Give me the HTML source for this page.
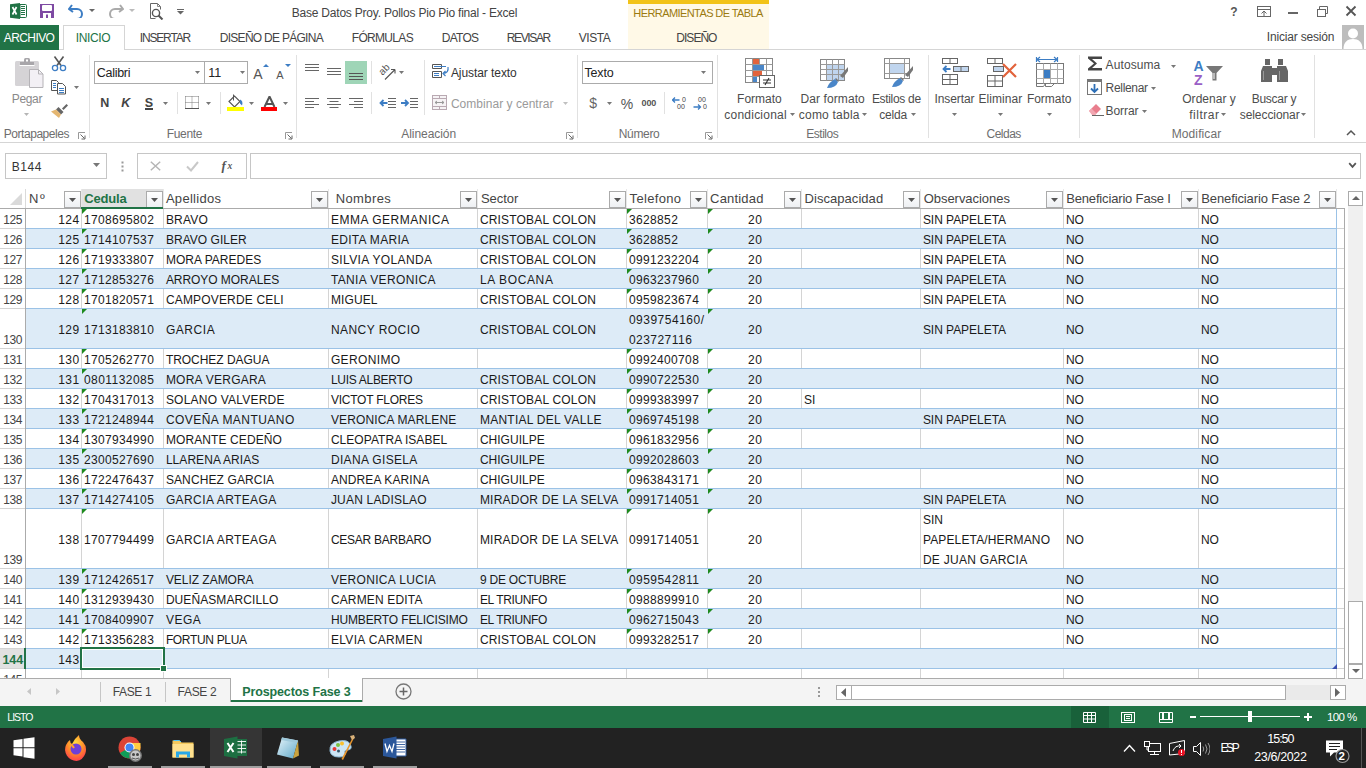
<!DOCTYPE html><html><head><meta charset="utf-8"><style>html,body{margin:0;padding:0;width:1366px;height:768px;overflow:hidden;background:#fff;position:relative;font-family:"Liberation Sans",sans-serif;}svg{display:block}</style></head><body><div style="position:absolute;left:291.78px;top:3.00px;font-size:12px;line-height:20px;color:#444;white-space:pre;letter-spacing:-0.216px;">Base Datos Proy. Pollos Pio Pio final - Excel</div>
<div style="position:absolute;left:628px;top:0px;width:141px;height:4px;background:#F2C318;"></div>
<div style="position:absolute;left:628px;top:4px;width:141px;height:46px;background:#FFF9E7;"></div>
<div style="position:absolute;left:633.34px;top:3.00px;font-size:11px;line-height:20px;color:#9B7A0F;white-space:pre;letter-spacing:-0.586px;">HERRAMIENTAS DE TABLA</div>
<div style="position:absolute;left:1230.28px;top:2.00px;font-size:12px;line-height:20px;color:#555;white-space:pre;font-weight:700;">?</div>
<svg style="position:absolute;left:1256px;top:5px;" width="16" height="13" viewBox="0 0 16 13"><rect x="1.5" y="1.5" width="13" height="10" fill="none" stroke="#666" stroke-width="1"/><line x1="1.5" y1="4.5" x2="14.5" y2="4.5" stroke="#666"/><path d="M8 11V6M5.5 8.5L8 6l2.5 2.5" fill="none" stroke="#666"/></svg>
<div style="position:absolute;left:1288px;top:12px;width:10px;height:2px;background:#666;"></div>
<svg style="position:absolute;left:1316px;top:5px;" width="13" height="13" viewBox="0 0 13 13"><rect x="1.5" y="4.5" width="8" height="7" fill="none" stroke="#666"/><path d="M3.5 4.5V1.5h8v7h-2" fill="none" stroke="#666"/></svg>
<svg style="position:absolute;left:1345px;top:5px;" width="12" height="12" viewBox="0 0 12 12"><path d="M1.5 1.5L10.5 10.5M10.5 1.5L1.5 10.5" stroke="#555" stroke-width="1.8"/></svg>
<svg style="position:absolute;left:10px;top:3px;" width="17" height="16" viewBox="0 0 17 16"><path d="M10 1.5h5.5q1 0 1 1v11q0 1-1 1H10z" fill="#fff" stroke="#207245" stroke-width="1"/><path d="M11 3.5h4M11 5.5h4M11 7.5h4M11 9.5h4M11 11.5h4" stroke="#207245" stroke-width="1"/><path d="M0 1.2L10 0V16L0 14.8Z" fill="#207245"/><path d="M2.5 4l4 7.5M6.5 4l-4 7.5" stroke="#fff" stroke-width="1.7"/></svg>
<svg style="position:absolute;left:40px;top:4px;" width="14" height="14" viewBox="0 0 14 14"><path d="M0 0h14v14H0z" fill="#7E4AA3"/><rect x="2" y="1" width="10" height="6" rx="1" fill="#fff"/><rect x="3" y="9" width="8" height="5" fill="#fff"/><rect x="6" y="10.5" width="2" height="3.5" fill="#7E4AA3"/></svg>
<svg style="position:absolute;left:68px;top:3px;" width="16" height="15" viewBox="0 0 16 15"><path d="M4 2L1 6l4 3" fill="none" stroke="#3C7DC4" stroke-width="2"/><path d="M1.5 6H9a5 5 0 0 1 0 10H7" fill="none" stroke="#3C7DC4" stroke-width="2"/></svg>
<svg style="position:absolute;left:89px;top:9px;" width="6" height="4" viewBox="0 0 6 4"><path d="M0 0h6L3 3z" fill="#666"/></svg>
<svg style="position:absolute;left:108px;top:3px;" width="16" height="15" viewBox="0 0 16 15"><path d="M12 2l3 4-4 3" fill="none" stroke="#aaa" stroke-width="2"/><path d="M14.5 6H7a5 5 0 0 0 0 10h2" fill="none" stroke="#aaa" stroke-width="2"/></svg>
<svg style="position:absolute;left:129px;top:9px;" width="6" height="4" viewBox="0 0 6 4"><path d="M0 0h6L3 3z" fill="#bbb"/></svg>
<svg style="position:absolute;left:149px;top:2px;" width="16" height="18" viewBox="0 0 16 18"><path d="M1.5 16.5V1.5h7l3 3v3" fill="none" stroke="#666"/><path d="M1.5 16.5h5" stroke="#666"/><path d="M8.5 1.5v3h3" fill="none" stroke="#888"/><circle cx="7" cy="11" r="3.6" fill="none" stroke="#555" stroke-width="1.4"/><path d="M9.5 13.5L13.5 17.5" stroke="#555" stroke-width="2"/></svg>
<svg style="position:absolute;left:177px;top:9px;" width="7" height="6" viewBox="0 0 7 6"><path d="M0 0.5h7" stroke="#666"/><path d="M0 2h7L3.5 5.5z" fill="#666"/></svg>
<div style="position:absolute;left:1266.78px;top:27.00px;font-size:12px;line-height:20px;color:#444;white-space:pre;letter-spacing:-0.179px;">Iniciar sesión</div>
<div style="position:absolute;left:1342px;top:25px;width:22px;height:24px;background:#BDBDBD;"></div>
<svg style="position:absolute;left:1342px;top:25px;" width="22" height="24" viewBox="0 0 22 24"><circle cx="11" cy="8.5" r="5" fill="#fff"/><path d="M1.5 24c0-7 4-10 9.5-10s9.5 3 9.5 10z" fill="#fff"/></svg>
<div style="position:absolute;left:0px;top:49px;width:1366px;height:1px;background:#D5D5D5;"></div>
<div style="position:absolute;left:0px;top:25px;width:59px;height:25px;background:#217346;"></div>
<div style="position:absolute;left:3.78px;top:28.00px;font-size:12px;line-height:20px;color:#fff;white-space:pre;letter-spacing:-0.581px;">ARCHIVO</div>
<div style="position:absolute;left:63px;top:25px;width:60px;height:24px;border:1px solid #D5D5D5;border-bottom:none;background:#fff;"></div>
<div style="position:absolute;left:75.78px;top:28.00px;font-size:12px;line-height:20px;color:#217346;white-space:pre;letter-spacing:-0.394px;">INICIO</div>
<div style="position:absolute;left:139.78px;top:28.00px;font-size:12px;line-height:20px;color:#444;white-space:pre;letter-spacing:-1.168px;">INSERTAR</div>
<div style="position:absolute;left:219.78px;top:28.00px;font-size:12px;line-height:20px;color:#444;white-space:pre;letter-spacing:-0.720px;">DISEÑO DE PÁGINA</div>
<div style="position:absolute;left:351.78px;top:28.00px;font-size:12px;line-height:20px;color:#444;white-space:pre;letter-spacing:-0.684px;">FÓRMULAS</div>
<div style="position:absolute;left:441.78px;top:28.00px;font-size:12px;line-height:20px;color:#444;white-space:pre;letter-spacing:-0.759px;">DATOS</div>
<div style="position:absolute;left:506.78px;top:28.00px;font-size:12px;line-height:20px;color:#444;white-space:pre;letter-spacing:-1.365px;">REVISAR</div>
<div style="position:absolute;left:578.78px;top:28.00px;font-size:12px;line-height:20px;color:#444;white-space:pre;letter-spacing:-0.474px;">VISTA</div>
<div style="position:absolute;left:676.28px;top:28.00px;font-size:12px;line-height:20px;color:#444;white-space:pre;letter-spacing:-0.963px;">DISEÑO</div>
<div style="position:absolute;left:0px;top:142px;width:1366px;height:1px;background:#D5D5D5;"></div>
<div style="position:absolute;left:89px;top:55px;width:1px;height:83px;background:#E1E1E1;"></div>
<div style="position:absolute;left:296px;top:55px;width:1px;height:83px;background:#E1E1E1;"></div>
<div style="position:absolute;left:577px;top:55px;width:1px;height:83px;background:#E1E1E1;"></div>
<div style="position:absolute;left:717px;top:55px;width:1px;height:83px;background:#E1E1E1;"></div>
<div style="position:absolute;left:928px;top:55px;width:1px;height:83px;background:#E1E1E1;"></div>
<div style="position:absolute;left:1079px;top:55px;width:1px;height:83px;background:#E1E1E1;"></div>
<div style="position:absolute;left:1314px;top:55px;width:1px;height:83px;background:#E1E1E1;"></div>
<svg style="position:absolute;left:14px;top:57px;" width="31" height="32" viewBox="0 0 31 32"><rect x="1" y="4" width="24" height="25" rx="1.5" fill="#D5D3D6"/><path d="M6 5h14v3.5H6z" fill="#A8A6AA"/><path d="M5.5 8.5h15" stroke="#fff"/><rect x="10" y="1" width="6" height="5" rx="1.5" fill="#A8A6AA"/><rect x="12" y="2.5" width="2" height="2" fill="#fff"/><path d="M15.5 12.5h9l4.5 4.5v13.5h-13.5z" fill="#F3F0F5" stroke="#B5B3B7"/><path d="M24.5 12.5v4.5H29" fill="none" stroke="#B5B3B7"/></svg>
<div style="position:absolute;left:11.78px;top:89.00px;font-size:12px;line-height:20px;color:#8A8A8A;white-space:pre;letter-spacing:-0.333px;">Pegar</div>
<svg style="position:absolute;left:24px;top:113px;" width="5" height="3" viewBox="0 0 5 3"><path d="M0 0h5L2.5 3z" fill="#B5B5B5"/></svg>
<svg style="position:absolute;left:51px;top:55px;" width="16" height="17" viewBox="0 0 16 17"><path d="M3.5 1.5l6.5 9M12.5 1.5L6 10.5" stroke="#555" stroke-width="1.6"/><circle cx="4" cy="13" r="2.6" fill="none" stroke="#3C7DC4" stroke-width="1.3"/><circle cx="12" cy="13" r="2.6" fill="none" stroke="#3C7DC4" stroke-width="1.3"/></svg>
<svg style="position:absolute;left:51px;top:79px;" width="16" height="16" viewBox="0 0 16 16"><path d="M0.5 1.5h5l2 2v8h-7z" fill="#fff" stroke="#555"/><path d="M6.5 4.5h5l3 3v7.5h-8z" fill="#fff" stroke="#555"/><path d="M2 4.5h3M2 6.5h3M2 8.5h3M8 9.5h5M8 11.5h5M8 13.5h5" stroke="#3C7DC4"/></svg>
<svg style="position:absolute;left:74px;top:86px;" width="5" height="3" viewBox="0 0 5 3"><path d="M0 0h5L2.5 3z" fill="#777"/></svg>
<svg style="position:absolute;left:51px;top:102px;" width="17" height="16" viewBox="0 0 17 16"><path d="M11 6.5l4.5-4.5 1.5 1.5-4.5 4.5z" fill="#666"/><path d="M7.5 5l5 5-2.5 2.5-5-5z" fill="#666"/><path d="M0 9.5l5-2 5 5-2 3.5z" fill="#E4B671"/></svg>
<div style="position:absolute;left:3.78px;top:124.00px;font-size:12px;line-height:20px;color:#6e6e6e;white-space:pre;letter-spacing:-0.456px;">Portapapeles</div>
<svg style="position:absolute;left:78px;top:132px;" width="8" height="8" viewBox="0 0 8 8"><path d="M0.5 7V0.5H7" fill="none" stroke="#999"/><path d="M2.5 2.5l4 4M7 3.5v3.5H3.5" fill="none" stroke="#666"/></svg>
<div style="position:absolute;left:94px;top:61px;width:109px;height:21px;border:1px solid #ABABAB;background:#fff"></div>
<div style="position:absolute;left:205px;top:61px;width:42px;height:21px;border:1px solid #ABABAB;border-left:none;background:#fff"></div>
<div style="position:absolute;left:96.75px;top:63.00px;font-size:12.5px;line-height:20px;color:#222;white-space:pre;letter-spacing:-0.281px;">Calibri</div>
<svg style="position:absolute;left:195px;top:71px;" width="5" height="3" viewBox="0 0 5 3"><path d="M0 0h5L2.5 3z" fill="#777"/></svg>
<div style="position:absolute;left:208.25px;top:63.00px;font-size:12.5px;line-height:20px;color:#222;white-space:pre;">11</div>
<svg style="position:absolute;left:240px;top:71px;" width="5" height="3" viewBox="0 0 5 3"><path d="M0 0h5L2.5 3z" fill="#777"/></svg>
<div style="position:absolute;left:253.16px;top:64.00px;font-size:14px;line-height:20px;color:#555;white-space:pre;">A</div>
<svg style="position:absolute;left:263px;top:64px;" width="6" height="3" viewBox="0 0 6 3"><path d="M0 3h6L3 0z" fill="#3C7DC4"/></svg>
<div style="position:absolute;left:276.34px;top:65.00px;font-size:11px;line-height:20px;color:#555;white-space:pre;">A</div>
<svg style="position:absolute;left:285px;top:64px;" width="6" height="3" viewBox="0 0 6 3"><path d="M0 0h6L3 3z" fill="#3C7DC4"/></svg>
<div style="position:absolute;left:100.25px;top:93.00px;font-size:12.5px;line-height:20px;color:#444;white-space:pre;font-weight:700;">N</div>
<div style="position:absolute;left:121.25px;top:93.00px;font-size:12.5px;line-height:20px;color:#444;white-space:pre;font-weight:700;font-style:italic;">K</div>
<div style="position:absolute;left:144.75px;top:93.00px;font-size:12.5px;line-height:20px;color:#444;white-space:pre;font-weight:700;">S</div>
<div style="position:absolute;left:145px;top:108px;width:8px;height:2px;background:#444;"></div>
<svg style="position:absolute;left:163px;top:102px;" width="5" height="3" viewBox="0 0 5 3"><path d="M0 0h5L2.5 3z" fill="#777"/></svg>
<div style="position:absolute;left:177px;top:92px;width:1px;height:22px;background:#E1E1E1;"></div>
<svg style="position:absolute;left:185px;top:96px;" width="14" height="13" viewBox="0 0 14 13"><path d="M0.5 0.5h13M0.5 6.5h13M0.5 0.5v12M7 0.5v12M13.5 0.5v12" fill="none" stroke="#777" stroke-dasharray="1 1"/><path d="M0 12.5h14" stroke="#555"/></svg>
<svg style="position:absolute;left:206px;top:102px;" width="5" height="3" viewBox="0 0 5 3"><path d="M0 0h5L2.5 3z" fill="#777"/></svg>
<div style="position:absolute;left:220px;top:92px;width:1px;height:22px;background:#E1E1E1;"></div>
<svg style="position:absolute;left:227px;top:94px;" width="17" height="18" viewBox="0 0 17 18"><path d="M2 7.5l5.5-5.5 5.5 5.5-5.5 5.5z" fill="#fff" stroke="#555" stroke-width="1.1"/><path d="M6.5 0.5v6" stroke="#555"/><path d="M13 5.5q3.5 1.5 2 6l-2-2z" fill="#3C7DC4"/><rect x="0" y="13" width="17" height="4" fill="#FFFF00"/></svg>
<svg style="position:absolute;left:249px;top:102px;" width="5" height="3" viewBox="0 0 5 3"><path d="M0 0h5L2.5 3z" fill="#777"/></svg>
<svg style="position:absolute;left:261px;top:96px;" width="17" height="16" viewBox="0 0 17 16"><path d="M3.5 11L8.5 0.5 13.5 11M5 8h7" fill="none" stroke="#555" stroke-width="2"/><rect x="0" y="11" width="16" height="4" fill="#FF0000"/></svg>
<svg style="position:absolute;left:283px;top:102px;" width="5" height="3" viewBox="0 0 5 3"><path d="M0 0h5L2.5 3z" fill="#777"/></svg>
<div style="position:absolute;left:166.78px;top:124.00px;font-size:12px;line-height:20px;color:#6e6e6e;white-space:pre;letter-spacing:-0.332px;">Fuente</div>
<svg style="position:absolute;left:285px;top:132px;" width="8" height="8" viewBox="0 0 8 8"><path d="M0.5 7V0.5H7" fill="none" stroke="#999"/><path d="M2.5 2.5l4 4M7 3.5v3.5H3.5" fill="none" stroke="#666"/></svg>
<svg style="position:absolute;left:305px;top:64px;" width="14" height="7" viewBox="0 0 14 7"><rect x="0" y="0" width="14" height="1" fill="#666"/><rect x="0" y="3" width="14" height="1" fill="#666"/><rect x="0" y="6" width="14" height="1" fill="#666"/></svg>
<svg style="position:absolute;left:327px;top:68px;" width="14" height="7" viewBox="0 0 14 7"><rect x="0" y="0" width="14" height="1" fill="#666"/><rect x="0" y="3" width="14" height="1" fill="#666"/><rect x="0" y="6" width="14" height="1" fill="#666"/></svg>
<div style="position:absolute;left:345px;top:61px;width:22px;height:23px;background:#9FD5B7;"></div>
<svg style="position:absolute;left:349px;top:73px;" width="14" height="7" viewBox="0 0 14 7"><rect x="0" y="0" width="14" height="1" fill="#555"/><rect x="0" y="3" width="14" height="1" fill="#555"/><rect x="0" y="6" width="14" height="1" fill="#555"/></svg>
<svg style="position:absolute;left:305px;top:98px;" width="14" height="10" viewBox="0 0 14 10"><rect x="0" y="0" width="14" height="1" fill="#666"/><rect x="0" y="3" width="9" height="1" fill="#666"/><rect x="0" y="6" width="14" height="1" fill="#666"/><rect x="0" y="9" width="9" height="1" fill="#666"/></svg>
<svg style="position:absolute;left:327px;top:98px;" width="14" height="10" viewBox="0 0 14 10"><rect x="0.0" y="0" width="14" height="1" fill="#666"/><rect x="2.5" y="3" width="9" height="1" fill="#666"/><rect x="0.0" y="6" width="14" height="1" fill="#666"/><rect x="2.5" y="9" width="9" height="1" fill="#666"/></svg>
<svg style="position:absolute;left:349px;top:98px;" width="14" height="10" viewBox="0 0 14 10"><rect x="0" y="0" width="14" height="1" fill="#666"/><rect x="5" y="3" width="9" height="1" fill="#666"/><rect x="0" y="6" width="14" height="1" fill="#666"/><rect x="5" y="9" width="9" height="1" fill="#666"/></svg>
<div style="position:absolute;left:371px;top:61px;width:1px;height:23px;background:#E1E1E1;"></div>
<div style="position:absolute;left:371px;top:92px;width:1px;height:22px;background:#E1E1E1;"></div>
<svg style="position:absolute;left:378px;top:62px;" width="19" height="19" viewBox="0 0 19 19"><text x="1" y="11" font-family="Liberation Sans" font-size="10" fill="#555" transform="rotate(-45 6 8)">ab</text><path d="M7 17.5L17 7.5M17 7.5h-4M17 7.5v4" fill="none" stroke="#555" stroke-width="1.1"/></svg>
<svg style="position:absolute;left:399px;top:71px;" width="5" height="3" viewBox="0 0 5 3"><path d="M0 0h5L2.5 3z" fill="#777"/></svg>
<svg style="position:absolute;left:379px;top:97px;" width="17" height="12" viewBox="0 0 17 12"><path d="M9 1.5h8M9 4.5h8M9 7.5h8M9 10.5h8" stroke="#666"/><path d="M1.5 6h7M4.5 3L1.5 6l3 3" fill="none" stroke="#3C7DC4" stroke-width="1.8"/></svg>
<svg style="position:absolute;left:401px;top:97px;" width="17" height="12" viewBox="0 0 17 12"><path d="M9 1.5h8M9 4.5h8M9 7.5h8M9 10.5h8" stroke="#666"/><path d="M0 6h7M4 3l3 3-3 3" fill="none" stroke="#3C7DC4" stroke-width="1.8"/></svg>
<div style="position:absolute;left:424px;top:60px;width:1px;height:55px;background:#E1E1E1;"></div>
<svg style="position:absolute;left:432px;top:63px;" width="18" height="16" viewBox="0 0 18 16"><path d="M0.5 1.5h9v4h-9zM0.5 8.5h9v6h-9z" fill="#fff" stroke="#555"/><path d="M2 3.5h12M2 10.5h5M2 12.5h5" stroke="#3C7DC4"/><path d="M16 4q1 6-5 6.5M13.5 8l-2.5 2.5 2.5 2.5" fill="none" stroke="#3C7DC4" stroke-width="1.2"/></svg>
<div style="position:absolute;left:450.88px;top:63.00px;font-size:12px;line-height:20px;color:#333;white-space:pre;letter-spacing:-0.067px;">Ajustar texto</div>
<svg style="position:absolute;left:432px;top:95px;" width="15" height="15" viewBox="0 0 15 15"><rect x="0.5" y="0.5" width="14" height="14" fill="#F6F3F5" stroke="#B9A9B2"/><path d="M0.5 3.5h14M0.5 11.5h14M7.5 0.5v3M7.5 11.5v3" stroke="#B9A9B2"/><path d="M3 7.5h9M3 7.5l2-1.5M3 7.5l2 1.5M12 7.5l-2-1.5M12 7.5l-2 1.5" stroke="#999" fill="none"/></svg>
<div style="position:absolute;left:450.88px;top:94.00px;font-size:12px;line-height:20px;color:#9A9A9A;white-space:pre;letter-spacing:0.033px;">Combinar y centrar</div>
<svg style="position:absolute;left:563px;top:102px;" width="5" height="3" viewBox="0 0 5 3"><path d="M0 0h5L2.5 3z" fill="#C0C0C0"/></svg>
<div style="position:absolute;left:401.28px;top:124.00px;font-size:12px;line-height:20px;color:#6e6e6e;white-space:pre;letter-spacing:-0.053px;">Alineación</div>
<svg style="position:absolute;left:566px;top:132px;" width="8" height="8" viewBox="0 0 8 8"><path d="M0.5 7V0.5H7" fill="none" stroke="#999"/><path d="M2.5 2.5l4 4M7 3.5v3.5H3.5" fill="none" stroke="#666"/></svg>
<div style="position:absolute;left:582px;top:61px;width:129px;height:21px;border:1px solid #ABABAB;background:#fff"></div>
<div style="position:absolute;left:584.45px;top:63.00px;font-size:12.5px;line-height:20px;color:#222;white-space:pre;letter-spacing:-0.160px;">Texto</div>
<svg style="position:absolute;left:701px;top:71px;" width="5" height="3" viewBox="0 0 5 3"><path d="M0 0h5L2.5 3z" fill="#777"/></svg>
<div style="position:absolute;left:589.16px;top:93.00px;font-size:14px;line-height:20px;color:#666;white-space:pre;">$</div>
<svg style="position:absolute;left:607px;top:102px;" width="5" height="3" viewBox="0 0 5 3"><path d="M0 0h5L2.5 3z" fill="#777"/></svg>
<div style="position:absolute;left:620.66px;top:94.00px;font-size:14px;line-height:20px;color:#555;white-space:pre;">%</div>
<div style="position:absolute;left:641.46px;top:93.00px;font-size:9px;line-height:20px;color:#555;white-space:pre;font-weight:700;letter-spacing:-0.066px;">000</div>
<div style="position:absolute;left:664px;top:92px;width:1px;height:22px;background:#E1E1E1;"></div>
<svg style="position:absolute;left:672px;top:96px;" width="16" height="14" viewBox="0 0 16 14"><text x="10" y="6" font-family="Liberation Sans" font-size="7" fill="#444">0</text><text x="5" y="13" font-family="Liberation Sans" font-size="7" fill="#444">00</text><path d="M0.5 4h7M3 1.5L0.5 4 3 6.5" stroke="#3C7DC4" fill="none" stroke-width="1.3"/></svg>
<svg style="position:absolute;left:693px;top:96px;" width="16" height="14" viewBox="0 0 16 14"><text x="5" y="6" font-family="Liberation Sans" font-size="7" fill="#444">00</text><text x="10" y="13" font-family="Liberation Sans" font-size="7" fill="#444">0</text><path d="M0.5 11h7M5 8.5L7.5 11 5 13.5" stroke="#3C7DC4" fill="none" stroke-width="1.3"/></svg>
<div style="position:absolute;left:618.78px;top:124.00px;font-size:12px;line-height:20px;color:#6e6e6e;white-space:pre;letter-spacing:-0.338px;">Número</div>
<svg style="position:absolute;left:705px;top:132px;" width="8" height="8" viewBox="0 0 8 8"><path d="M0.5 7V0.5H7" fill="none" stroke="#999"/><path d="M2.5 2.5l4 4M7 3.5v3.5H3.5" fill="none" stroke="#666"/></svg>
<svg style="position:absolute;left:745px;top:58px;" width="31" height="30" viewBox="0 0 31 30"><rect x="0.5" y="0.5" width="27" height="24" fill="#fff" stroke="#888"/><path d="M0.5 6.5h27M0.5 12.5h27M0.5 18.5h27M7.5 0.5v24M14.5 0.5v24M21.5 0.5v24" stroke="#999"/><rect x="8" y="1" width="6" height="5" fill="#E2633C"/><rect x="8" y="7" width="11" height="5" fill="#4A86C8"/><rect x="8" y="13" width="9" height="5" fill="#E2633C"/><rect x="8" y="19" width="4" height="5" fill="#4A86C8"/><rect x="14.5" y="17.5" width="15" height="12" fill="#fff" stroke="#666"/><path d="M18 22h8M18 25h8M24 20l-4 7" stroke="#333" stroke-width="1.1"/></svg>
<div style="position:absolute;left:737.08px;top:89.00px;font-size:12px;line-height:20px;color:#4d4d4d;white-space:pre;">Formato</div>
<div style="position:absolute;left:724.28px;top:105.00px;font-size:12px;line-height:20px;color:#4d4d4d;white-space:pre;letter-spacing:0.235px;">condicional</div>
<svg style="position:absolute;left:790px;top:113px;" width="5" height="3" viewBox="0 0 5 3"><path d="M0 0h5L2.5 3z" fill="#777"/></svg>
<svg style="position:absolute;left:820px;top:59px;" width="30" height="30" viewBox="0 0 30 30"><rect x="0.5" y="0.5" width="24" height="21" fill="#fff" stroke="#888"/><rect x="6" y="6" width="18" height="15" fill="#C0D5EE"/><path d="M0.5 5.5h24M0.5 10.5h24M0.5 15.5h24M6.5 0.5v21M12.5 0.5v21M18.5 0.5v21" stroke="#999"/><path d="M20 17l8-9v4l-5 7z" fill="#777"/><path d="M16 19l3 3-1 1-3-3z" fill="#777"/><path d="M7 29q2-6 8-9l3 3q-2 6-11 6z" fill="#4A86C8"/></svg>
<div style="position:absolute;left:800.48px;top:89.00px;font-size:12px;line-height:20px;color:#4d4d4d;white-space:pre;letter-spacing:0.094px;">Dar formato</div>
<div style="position:absolute;left:798.78px;top:105.00px;font-size:12px;line-height:20px;color:#4d4d4d;white-space:pre;letter-spacing:0.222px;">como tabla</div>
<svg style="position:absolute;left:862px;top:113px;" width="5" height="3" viewBox="0 0 5 3"><path d="M0 0h5L2.5 3z" fill="#777"/></svg>
<svg style="position:absolute;left:884px;top:58px;" width="30" height="30" viewBox="0 0 30 30"><rect x="0.5" y="0.5" width="25" height="20" fill="#fff" stroke="#888"/><rect x="6" y="6" width="14" height="9" fill="#C0D5EE"/><path d="M0.5 5.5h25M0.5 15.5h25M5.5 0.5v20M20.5 0.5v20" stroke="#999"/><path d="M21 17l8-9v4l-5 7z" fill="#777"/><path d="M17 19l3 3-1 1-3-3z" fill="#777"/><path d="M8 29q2-6 8-9l3 3q-2 6-11 6z" fill="#4A86C8"/></svg>
<div style="position:absolute;left:871.88px;top:89.00px;font-size:12px;line-height:20px;color:#4d4d4d;white-space:pre;letter-spacing:-0.315px;">Estilos de</div>
<div style="position:absolute;left:879.28px;top:105.00px;font-size:12px;line-height:20px;color:#4d4d4d;white-space:pre;letter-spacing:-0.222px;">celda</div>
<svg style="position:absolute;left:911px;top:113px;" width="5" height="3" viewBox="0 0 5 3"><path d="M0 0h5L2.5 3z" fill="#777"/></svg>
<div style="position:absolute;left:806.28px;top:124.00px;font-size:12px;line-height:20px;color:#6e6e6e;white-space:pre;letter-spacing:-0.491px;">Estilos</div>
<svg style="position:absolute;left:942px;top:58px;" width="27" height="27" viewBox="0 0 27 27"><rect x="0.5" y="0.5" width="15" height="5" fill="#fff" stroke="#666"/><path d="M8 0.5v5" stroke="#666"/><rect x="11.5" y="8.5" width="15" height="5" fill="#C0D5EE" stroke="#666"/><path d="M19 8.5v5" stroke="#666"/><path d="M1.5 11h7M4.5 8L1.5 11l3 3" stroke="#3C7DC4" fill="none" stroke-width="1.8"/><rect x="0.5" y="16.5" width="15" height="10" fill="#fff" stroke="#666"/><path d="M0.5 21.5h15M8 16.5v10" stroke="#666"/></svg>
<svg style="position:absolute;left:952px;top:113px;" width="5" height="3" viewBox="0 0 5 3"><path d="M0 0h5L2.5 3z" fill="#777"/></svg>
<svg style="position:absolute;left:987px;top:58px;" width="30" height="29" viewBox="0 0 30 29"><rect x="0.5" y="0.5" width="15" height="5" fill="#fff" stroke="#666"/><path d="M8 0.5v5" stroke="#666"/><rect x="6.5" y="8.5" width="10" height="5" fill="#C0D5EE" stroke="#666"/><rect x="0.5" y="17.5" width="15" height="11" fill="#fff" stroke="#666"/><path d="M0.5 23h15M8 17.5v11" stroke="#666"/><path d="M16 6l13 13M29 6L16 19" stroke="#E2633C" stroke-width="2.2"/></svg>
<svg style="position:absolute;left:998px;top:113px;" width="5" height="3" viewBox="0 0 5 3"><path d="M0 0h5L2.5 3z" fill="#777"/></svg>
<svg style="position:absolute;left:1035px;top:56px;" width="30" height="33" viewBox="0 0 30 33"><path d="M1.5 1v5M22.5 1v5M2 3.5h20M2 3.5l3-2.5M2 3.5l3 2.5M22 3.5l-3-2.5M22 3.5l-3 2.5" stroke="#3C7DC4" fill="none" stroke-width="1.2"/><rect x="1.5" y="7.5" width="27" height="20" fill="#fff" stroke="#777"/><path d="M1.5 13.5h27M1.5 22.5h27M8.5 7.5v20M15.5 7.5v20M22.5 7.5v20" stroke="#aaa"/><rect x="9" y="14" width="6" height="8" fill="#3C7DC4"/><path d="M1.5 27.5v3h7l2-3M10.5 27.5v3h6l3-3" fill="none" stroke="#777"/></svg>
<svg style="position:absolute;left:1047px;top:113px;" width="5" height="3" viewBox="0 0 5 3"><path d="M0 0h5L2.5 3z" fill="#777"/></svg>
<div style="position:absolute;left:934.58px;top:89.00px;font-size:12px;line-height:20px;color:#4d4d4d;white-space:pre;letter-spacing:-0.112px;">Insertar</div>
<div style="position:absolute;left:978.48px;top:89.00px;font-size:12px;line-height:20px;color:#4d4d4d;white-space:pre;letter-spacing:0.065px;">Eliminar</div>
<div style="position:absolute;left:1026.88px;top:89.00px;font-size:12px;line-height:20px;color:#4d4d4d;white-space:pre;letter-spacing:-0.015px;">Formato</div>
<div style="position:absolute;left:986.58px;top:124.00px;font-size:12px;line-height:20px;color:#6e6e6e;white-space:pre;letter-spacing:-0.532px;">Celdas</div>
<svg style="position:absolute;left:1087px;top:56px;" width="16" height="15" viewBox="0 0 16 15"><path d="M1 0.5h14v2.5H5l5 4.5-5 4.5h10v2.5H1v-2L7 7.5 1 2.5z" fill="#444"/></svg>
<div style="position:absolute;left:1105.58px;top:55.00px;font-size:12px;line-height:20px;color:#4d4d4d;white-space:pre;letter-spacing:0.096px;">Autosuma</div>
<svg style="position:absolute;left:1171px;top:65px;" width="5" height="3" viewBox="0 0 5 3"><path d="M0 0h5L2.5 3z" fill="#777"/></svg>
<svg style="position:absolute;left:1087px;top:79px;" width="16" height="16" viewBox="0 0 16 16"><rect x="0.5" y="0.5" width="14" height="15" fill="#fff" stroke="#777"/><rect x="0.5" y="0.5" width="14" height="2.5" fill="#777"/><path d="M7.5 5v8M4 9.5l3.5 3.5 3.5-3.5" stroke="#2D6FB7" stroke-width="1.8" fill="none"/></svg>
<div style="position:absolute;left:1105.58px;top:78.00px;font-size:12px;line-height:20px;color:#4d4d4d;white-space:pre;letter-spacing:-0.315px;">Rellenar</div>
<svg style="position:absolute;left:1151px;top:87px;" width="5" height="3" viewBox="0 0 5 3"><path d="M0 0h5L2.5 3z" fill="#777"/></svg>
<svg style="position:absolute;left:1087px;top:103px;" width="17" height="13" viewBox="0 0 17 13"><path d="M2 8l7-7 5 5-6 6z" fill="#E97E8D"/><path d="M2 8l2.5-2.5 5 5L8 12H5z" fill="#F2A7B2"/><path d="M5 12.5h12" stroke="#666"/></svg>
<div style="position:absolute;left:1105.58px;top:101.00px;font-size:12px;line-height:20px;color:#4d4d4d;white-space:pre;letter-spacing:-0.089px;">Borrar</div>
<svg style="position:absolute;left:1142px;top:110px;" width="5" height="3" viewBox="0 0 5 3"><path d="M0 0h5L2.5 3z" fill="#777"/></svg>
<svg style="position:absolute;left:1193px;top:58px;" width="32" height="28" viewBox="0 0 32 28"><text x="0.5" y="12.5" font-family="Liberation Sans" font-weight="700" font-size="14" fill="#3C7DC4">A</text><text x="1" y="26.5" font-family="Liberation Sans" font-weight="700" font-size="14" fill="#9A5FC6">Z</text><path d="M13 8h17l-6.5 7v7.5h-4V15z" fill="#777"/><path d="M21 15v6" stroke="#fff"/></svg>
<div style="position:absolute;left:1182.28px;top:89.00px;font-size:12px;line-height:20px;color:#4d4d4d;white-space:pre;letter-spacing:0.018px;">Ordenar y</div>
<div style="position:absolute;left:1189.28px;top:105.00px;font-size:12px;line-height:20px;color:#4d4d4d;white-space:pre;letter-spacing:0.505px;">filtrar</div>
<svg style="position:absolute;left:1221px;top:113px;" width="5" height="3" viewBox="0 0 5 3"><path d="M0 0h5L2.5 3z" fill="#777"/></svg>
<svg style="position:absolute;left:1261px;top:59px;" width="27" height="24" viewBox="0 0 27 24"><rect x="4" y="0" width="5" height="6" fill="#666"/><rect x="17" y="0" width="5" height="6" fill="#666"/><path d="M2 7h9v16H0V12zM16 7h9l2 5v11H16z" fill="#666"/><rect x="10" y="9" width="7" height="7" fill="#666"/><path d="M2.5 12v9M18.5 12v9" stroke="#999"/></svg>
<div style="position:absolute;left:1251.68px;top:89.00px;font-size:12px;line-height:20px;color:#4d4d4d;white-space:pre;letter-spacing:-0.270px;">Buscar y</div>
<div style="position:absolute;left:1239.78px;top:105.00px;font-size:12px;line-height:20px;color:#4d4d4d;white-space:pre;letter-spacing:-0.080px;">seleccionar</div>
<svg style="position:absolute;left:1301px;top:113px;" width="5" height="3" viewBox="0 0 5 3"><path d="M0 0h5L2.5 3z" fill="#777"/></svg>
<div style="position:absolute;left:1171.68px;top:124.00px;font-size:12px;line-height:20px;color:#6e6e6e;white-space:pre;letter-spacing:0.114px;">Modificar</div>
<svg style="position:absolute;left:1346px;top:129px;" width="10" height="7" viewBox="0 0 10 7"><path d="M1 6l4-4 4 4" fill="none" stroke="#555" stroke-width="1.5"/></svg>
<div style="position:absolute;left:5px;top:153px;width:100px;height:24px;border:1px solid #C6C6C6;background:#fff"></div>
<div style="position:absolute;left:11.78px;top:157.00px;font-size:12px;line-height:20px;color:#333;white-space:pre;letter-spacing:0.556px;">B144</div>
<svg style="position:absolute;left:93px;top:163px;" width="7" height="4" viewBox="0 0 7 4"><path d="M0 0h7L3.5 4z" fill="#777"/></svg>
<svg style="position:absolute;left:121px;top:161px;" width="3" height="11" viewBox="0 0 3 11"><rect x="0.5" y="0.5" width="2" height="2" fill="#999"/><rect x="0.5" y="4.5" width="2" height="2" fill="#999"/><rect x="0.5" y="8.5" width="2" height="2" fill="#999"/></svg>
<div style="position:absolute;left:137px;top:153px;width:108px;height:24px;border:1px solid #C6C6C6;background:#fff"></div>
<svg style="position:absolute;left:150px;top:161px;" width="11" height="10" viewBox="0 0 11 10"><path d="M0.8 0.8l9.4 8.4M10.2 0.8L0.8 9.2" stroke="#B5B5B5" stroke-width="1.5"/></svg>
<svg style="position:absolute;left:186px;top:161px;" width="13" height="11" viewBox="0 0 13 11"><path d="M1 5.5l4 4L12 1" fill="none" stroke="#C8C8C8" stroke-width="2"/></svg>
<svg style="position:absolute;left:221px;top:159px;" width="15" height="14" viewBox="0 0 15 14"><text x="0.5" y="10.5" font-family="Liberation Serif" font-style="italic" font-weight="700" font-size="13" fill="#555">f</text><text x="6.5" y="9.5" font-family="Liberation Serif" font-style="italic" font-weight="700" font-size="9.5" fill="#555">x</text></svg>
<div style="position:absolute;left:250px;top:153px;width:1109px;height:24px;border:1px solid #C6C6C6;background:#fff"></div>
<svg style="position:absolute;left:1348px;top:162px;" width="9" height="7" viewBox="0 0 9 7"><path d="M1.2 1.2l3.3 3.6 3.3-3.6" fill="none" stroke="#555" stroke-width="1.8"/></svg>
<div style="position:absolute;left:0px;top:189px;width:1345px;height:19px;background:#fff;"></div>
<div style="position:absolute;left:82px;top:189px;width:81px;height:19px;background:#E1E1E1;"></div>
<svg style="position:absolute;left:10px;top:193px;" width="13" height="12" viewBox="0 0 13 12"><path d="M12 0V12H0z" fill="#DADADA"/></svg>
<div style="position:absolute;left:81px;top:189px;width:1px;height:19px;background:#E8E8E8;"></div>
<div style="position:absolute;left:163px;top:189px;width:1px;height:19px;background:#E8E8E8;"></div>
<div style="position:absolute;left:328px;top:189px;width:1px;height:19px;background:#E8E8E8;"></div>
<div style="position:absolute;left:477px;top:189px;width:1px;height:19px;background:#E8E8E8;"></div>
<div style="position:absolute;left:626px;top:189px;width:1px;height:19px;background:#E8E8E8;"></div>
<div style="position:absolute;left:707px;top:189px;width:1px;height:19px;background:#E8E8E8;"></div>
<div style="position:absolute;left:801px;top:189px;width:1px;height:19px;background:#E8E8E8;"></div>
<div style="position:absolute;left:920px;top:189px;width:1px;height:19px;background:#E8E8E8;"></div>
<div style="position:absolute;left:1063px;top:189px;width:1px;height:19px;background:#E8E8E8;"></div>
<div style="position:absolute;left:1198px;top:189px;width:1px;height:19px;background:#E8E8E8;"></div>
<div style="position:absolute;left:1336px;top:189px;width:1px;height:19px;background:#E8E8E8;"></div>
<div style="position:absolute;left:25px;top:189px;width:1px;height:19px;background:#DADADA;"></div>
<div style="position:absolute;left:25px;top:208px;width:1px;height:470px;background:#ABABAB;"></div>
<div style="position:absolute;left:0px;top:208px;width:1345px;height:1px;background:#ABABAB;"></div>
<div style="position:absolute;left:29.12px;top:189.00px;font-size:13px;line-height:20px;color:#444;white-space:pre;letter-spacing:1.559px;">Nº</div>
<div style="position:absolute;left:64px;top:191px;width:15px;height:15px;border:1px solid #ABABAB;background:linear-gradient(#fff,#EEF0F3)"></div>
<svg style="position:absolute;left:69px;top:198px;" width="7" height="4" viewBox="0 0 7 4"><path d="M0 0h7L3.5 4z" fill="#555"/></svg>
<div style="position:absolute;left:84.22px;top:189.00px;font-size:13px;line-height:20px;color:#217346;white-space:pre;font-weight:700;letter-spacing:-0.169px;">Cedula</div>
<div style="position:absolute;left:146px;top:191px;width:15px;height:15px;border:1px solid #ABABAB;background:linear-gradient(#fff,#EEF0F3)"></div>
<svg style="position:absolute;left:151px;top:198px;" width="7" height="4" viewBox="0 0 7 4"><path d="M0 0h7L3.5 4z" fill="#555"/></svg>
<div style="position:absolute;left:165.92px;top:189.00px;font-size:13px;line-height:20px;color:#444;white-space:pre;letter-spacing:0.292px;">Apellidos</div>
<div style="position:absolute;left:311px;top:191px;width:15px;height:15px;border:1px solid #ABABAB;background:linear-gradient(#fff,#EEF0F3)"></div>
<svg style="position:absolute;left:316px;top:198px;" width="7" height="4" viewBox="0 0 7 4"><path d="M0 0h7L3.5 4z" fill="#555"/></svg>
<div style="position:absolute;left:335.72px;top:189.00px;font-size:13px;line-height:20px;color:#444;white-space:pre;letter-spacing:0.392px;">Nombres</div>
<div style="position:absolute;left:460px;top:191px;width:15px;height:15px;border:1px solid #ABABAB;background:linear-gradient(#fff,#EEF0F3)"></div>
<svg style="position:absolute;left:465px;top:198px;" width="7" height="4" viewBox="0 0 7 4"><path d="M0 0h7L3.5 4z" fill="#555"/></svg>
<div style="position:absolute;left:481.02px;top:189.00px;font-size:13px;line-height:20px;color:#444;white-space:pre;letter-spacing:-0.076px;">Sector</div>
<div style="position:absolute;left:609px;top:191px;width:15px;height:15px;border:1px solid #ABABAB;background:linear-gradient(#fff,#EEF0F3)"></div>
<svg style="position:absolute;left:614px;top:198px;" width="7" height="4" viewBox="0 0 7 4"><path d="M0 0h7L3.5 4z" fill="#555"/></svg>
<div style="position:absolute;left:629.62px;top:189.00px;font-size:13px;line-height:20px;color:#444;white-space:pre;letter-spacing:0.321px;">Telefono</div>
<div style="position:absolute;left:690px;top:191px;width:15px;height:15px;border:1px solid #ABABAB;background:linear-gradient(#fff,#EEF0F3)"></div>
<svg style="position:absolute;left:695px;top:198px;" width="7" height="4" viewBox="0 0 7 4"><path d="M0 0h7L3.5 4z" fill="#555"/></svg>
<div style="position:absolute;left:710.12px;top:189.00px;font-size:13px;line-height:20px;color:#444;white-space:pre;letter-spacing:0.179px;">Cantidad</div>
<div style="position:absolute;left:784px;top:191px;width:15px;height:15px;border:1px solid #ABABAB;background:linear-gradient(#fff,#EEF0F3)"></div>
<svg style="position:absolute;left:789px;top:198px;" width="7" height="4" viewBox="0 0 7 4"><path d="M0 0h7L3.5 4z" fill="#555"/></svg>
<div style="position:absolute;left:804.52px;top:189.00px;font-size:13px;line-height:20px;color:#444;white-space:pre;letter-spacing:0.050px;">Discapacidad</div>
<div style="position:absolute;left:903px;top:191px;width:15px;height:15px;border:1px solid #ABABAB;background:linear-gradient(#fff,#EEF0F3)"></div>
<svg style="position:absolute;left:908px;top:198px;" width="7" height="4" viewBox="0 0 7 4"><path d="M0 0h7L3.5 4z" fill="#555"/></svg>
<div style="position:absolute;left:923.72px;top:189.00px;font-size:13px;line-height:20px;color:#444;white-space:pre;letter-spacing:-0.043px;">Observaciones</div>
<div style="position:absolute;left:1046px;top:191px;width:15px;height:15px;border:1px solid #ABABAB;background:linear-gradient(#fff,#EEF0F3)"></div>
<svg style="position:absolute;left:1051px;top:198px;" width="7" height="4" viewBox="0 0 7 4"><path d="M0 0h7L3.5 4z" fill="#555"/></svg>
<div style="position:absolute;left:1066.22px;top:189.00px;font-size:13px;line-height:20px;color:#444;white-space:pre;letter-spacing:-0.165px;">Beneficiario Fase I</div>
<div style="position:absolute;left:1181px;top:191px;width:15px;height:15px;border:1px solid #ABABAB;background:linear-gradient(#fff,#EEF0F3)"></div>
<svg style="position:absolute;left:1186px;top:198px;" width="7" height="4" viewBox="0 0 7 4"><path d="M0 0h7L3.5 4z" fill="#555"/></svg>
<div style="position:absolute;left:1201.22px;top:189.00px;font-size:13px;line-height:20px;color:#444;white-space:pre;letter-spacing:-0.110px;">Beneficiario Fase 2</div>
<div style="position:absolute;left:1319px;top:191px;width:15px;height:15px;border:1px solid #ABABAB;background:linear-gradient(#fff,#EEF0F3)"></div>
<svg style="position:absolute;left:1324px;top:198px;" width="7" height="4" viewBox="0 0 7 4"><path d="M0 0h7L3.5 4z" fill="#555"/></svg>
<div style="position:absolute;left:81px;top:207px;width:82px;height:2px;background:#217346;"></div>
<div style="position:absolute;left:81px;top:209px;width:1px;height:19px;background:#D4D4D4;"></div>
<div style="position:absolute;left:163px;top:209px;width:1px;height:19px;background:#D4D4D4;"></div>
<div style="position:absolute;left:328px;top:209px;width:1px;height:19px;background:#D4D4D4;"></div>
<div style="position:absolute;left:477px;top:209px;width:1px;height:19px;background:#D4D4D4;"></div>
<div style="position:absolute;left:626px;top:209px;width:1px;height:19px;background:#D4D4D4;"></div>
<div style="position:absolute;left:707px;top:209px;width:1px;height:19px;background:#D4D4D4;"></div>
<div style="position:absolute;left:801px;top:209px;width:1px;height:19px;background:#D4D4D4;"></div>
<div style="position:absolute;left:920px;top:209px;width:1px;height:19px;background:#D4D4D4;"></div>
<div style="position:absolute;left:1063px;top:209px;width:1px;height:19px;background:#D4D4D4;"></div>
<div style="position:absolute;left:1198px;top:209px;width:1px;height:19px;background:#D4D4D4;"></div>
<div style="position:absolute;left:1337px;top:209px;width:7px;height:19px;background:#fff;"></div>
<div style="position:absolute;left:26px;top:228px;width:1310px;height:1px;background:#9BC2E6;"></div>
<div style="position:absolute;left:0px;top:228px;width:25px;height:1px;background:#D4D4D4;"></div>
<div style="position:absolute;left:1337px;top:228px;width:7px;height:1px;background:#D4D4D4;"></div>
<div style="position:absolute;left:3.28px;top:210.00px;font-size:12px;line-height:20px;color:#444;white-space:pre;letter-spacing:-0.416px;">125</div>
<div style="position:absolute;left:58.13px;top:210.00px;font-size:12px;line-height:20px;color:#1a1a1a;white-space:pre;letter-spacing:0.478px;">124</div>
<div style="position:absolute;left:83.88px;top:210.00px;font-size:12px;line-height:20px;color:#1a1a1a;white-space:pre;letter-spacing:0.357px;">1708695802</div>
<div style="position:absolute;left:165.88px;top:210.00px;font-size:12px;line-height:20px;color:#1a1a1a;white-space:pre;letter-spacing:0.195px;">BRAVO</div>
<div style="position:absolute;left:330.88px;top:210.00px;font-size:12px;line-height:20px;color:#1a1a1a;white-space:pre;letter-spacing:0.516px;">EMMA GERMANICA</div>
<div style="position:absolute;left:479.88px;top:210.00px;font-size:12px;line-height:20px;color:#1a1a1a;white-space:pre;letter-spacing:0.185px;">CRISTOBAL COLON</div>
<div style="position:absolute;left:628.88px;top:210.00px;font-size:12px;line-height:20px;color:#1a1a1a;white-space:pre;letter-spacing:0.376px;">3628852</div>
<div style="position:absolute;left:748.00px;top:210.00px;font-size:12px;line-height:20px;color:#1a1a1a;white-space:pre;letter-spacing:0.633px;">20</div>
<div style="position:absolute;left:922.88px;top:210.00px;font-size:12px;line-height:20px;color:#1a1a1a;white-space:pre;letter-spacing:-0.039px;">SIN PAPELETA</div>
<div style="position:absolute;left:1065.88px;top:210.00px;font-size:12px;line-height:20px;color:#1a1a1a;white-space:pre;">NO</div>
<div style="position:absolute;left:1200.88px;top:210.00px;font-size:12px;line-height:20px;color:#1a1a1a;white-space:pre;">NO</div>
<svg style="position:absolute;left:82px;top:209px;" width="5" height="5" viewBox="0 0 5 5"><path d="M0 0h5L0 5z" fill="#1E8A1E"/></svg>
<svg style="position:absolute;left:627px;top:209px;" width="5" height="5" viewBox="0 0 5 5"><path d="M0 0h5L0 5z" fill="#1E8A1E"/></svg>
<svg style="position:absolute;left:708px;top:209px;" width="5" height="5" viewBox="0 0 5 5"><path d="M0 0h5L0 5z" fill="#1E8A1E"/></svg>
<div style="position:absolute;left:26px;top:229px;width:1310px;height:19px;background:#DDEBF7;"></div>
<div style="position:absolute;left:1337px;top:229px;width:7px;height:19px;background:#fff;"></div>
<div style="position:absolute;left:26px;top:248px;width:1310px;height:1px;background:#9BC2E6;"></div>
<div style="position:absolute;left:0px;top:248px;width:25px;height:1px;background:#D4D4D4;"></div>
<div style="position:absolute;left:1337px;top:248px;width:7px;height:1px;background:#D4D4D4;"></div>
<div style="position:absolute;left:3.28px;top:230.00px;font-size:12px;line-height:20px;color:#444;white-space:pre;letter-spacing:-0.416px;">126</div>
<div style="position:absolute;left:58.13px;top:230.00px;font-size:12px;line-height:20px;color:#1a1a1a;white-space:pre;letter-spacing:0.478px;">125</div>
<div style="position:absolute;left:83.88px;top:230.00px;font-size:12px;line-height:20px;color:#1a1a1a;white-space:pre;letter-spacing:0.357px;">1714107537</div>
<div style="position:absolute;left:165.88px;top:230.00px;font-size:12px;line-height:20px;color:#1a1a1a;white-space:pre;letter-spacing:0.042px;">BRAVO GILER</div>
<div style="position:absolute;left:330.88px;top:230.00px;font-size:12px;line-height:20px;color:#1a1a1a;white-space:pre;letter-spacing:0.311px;">EDITA MARIA</div>
<div style="position:absolute;left:479.88px;top:230.00px;font-size:12px;line-height:20px;color:#1a1a1a;white-space:pre;letter-spacing:0.185px;">CRISTOBAL COLON</div>
<div style="position:absolute;left:628.88px;top:230.00px;font-size:12px;line-height:20px;color:#1a1a1a;white-space:pre;letter-spacing:0.376px;">3628852</div>
<div style="position:absolute;left:748.00px;top:230.00px;font-size:12px;line-height:20px;color:#1a1a1a;white-space:pre;letter-spacing:0.633px;">20</div>
<div style="position:absolute;left:922.88px;top:230.00px;font-size:12px;line-height:20px;color:#1a1a1a;white-space:pre;letter-spacing:-0.039px;">SIN PAPELETA</div>
<div style="position:absolute;left:1065.88px;top:230.00px;font-size:12px;line-height:20px;color:#1a1a1a;white-space:pre;">NO</div>
<div style="position:absolute;left:1200.88px;top:230.00px;font-size:12px;line-height:20px;color:#1a1a1a;white-space:pre;">NO</div>
<svg style="position:absolute;left:82px;top:229px;" width="5" height="5" viewBox="0 0 5 5"><path d="M0 0h5L0 5z" fill="#1E8A1E"/></svg>
<svg style="position:absolute;left:627px;top:229px;" width="5" height="5" viewBox="0 0 5 5"><path d="M0 0h5L0 5z" fill="#1E8A1E"/></svg>
<svg style="position:absolute;left:708px;top:229px;" width="5" height="5" viewBox="0 0 5 5"><path d="M0 0h5L0 5z" fill="#1E8A1E"/></svg>
<div style="position:absolute;left:81px;top:249px;width:1px;height:19px;background:#D4D4D4;"></div>
<div style="position:absolute;left:163px;top:249px;width:1px;height:19px;background:#D4D4D4;"></div>
<div style="position:absolute;left:328px;top:249px;width:1px;height:19px;background:#D4D4D4;"></div>
<div style="position:absolute;left:477px;top:249px;width:1px;height:19px;background:#D4D4D4;"></div>
<div style="position:absolute;left:626px;top:249px;width:1px;height:19px;background:#D4D4D4;"></div>
<div style="position:absolute;left:707px;top:249px;width:1px;height:19px;background:#D4D4D4;"></div>
<div style="position:absolute;left:801px;top:249px;width:1px;height:19px;background:#D4D4D4;"></div>
<div style="position:absolute;left:920px;top:249px;width:1px;height:19px;background:#D4D4D4;"></div>
<div style="position:absolute;left:1063px;top:249px;width:1px;height:19px;background:#D4D4D4;"></div>
<div style="position:absolute;left:1198px;top:249px;width:1px;height:19px;background:#D4D4D4;"></div>
<div style="position:absolute;left:1337px;top:249px;width:7px;height:19px;background:#fff;"></div>
<div style="position:absolute;left:26px;top:268px;width:1310px;height:1px;background:#9BC2E6;"></div>
<div style="position:absolute;left:0px;top:268px;width:25px;height:1px;background:#D4D4D4;"></div>
<div style="position:absolute;left:1337px;top:268px;width:7px;height:1px;background:#D4D4D4;"></div>
<div style="position:absolute;left:3.28px;top:250.00px;font-size:12px;line-height:20px;color:#444;white-space:pre;letter-spacing:-0.416px;">127</div>
<div style="position:absolute;left:58.13px;top:250.00px;font-size:12px;line-height:20px;color:#1a1a1a;white-space:pre;letter-spacing:0.478px;">126</div>
<div style="position:absolute;left:83.88px;top:250.00px;font-size:12px;line-height:20px;color:#1a1a1a;white-space:pre;letter-spacing:0.357px;">1719333807</div>
<div style="position:absolute;left:165.88px;top:250.00px;font-size:12px;line-height:20px;color:#1a1a1a;white-space:pre;letter-spacing:0.030px;">MORA PAREDES</div>
<div style="position:absolute;left:330.88px;top:250.00px;font-size:12px;line-height:20px;color:#1a1a1a;white-space:pre;letter-spacing:0.382px;">SILVIA YOLANDA</div>
<div style="position:absolute;left:479.88px;top:250.00px;font-size:12px;line-height:20px;color:#1a1a1a;white-space:pre;letter-spacing:0.185px;">CRISTOBAL COLON</div>
<div style="position:absolute;left:628.88px;top:250.00px;font-size:12px;line-height:20px;color:#1a1a1a;white-space:pre;letter-spacing:0.357px;">0991232204</div>
<div style="position:absolute;left:748.00px;top:250.00px;font-size:12px;line-height:20px;color:#1a1a1a;white-space:pre;letter-spacing:0.633px;">20</div>
<div style="position:absolute;left:922.88px;top:250.00px;font-size:12px;line-height:20px;color:#1a1a1a;white-space:pre;letter-spacing:-0.039px;">SIN PAPELETA</div>
<div style="position:absolute;left:1065.88px;top:250.00px;font-size:12px;line-height:20px;color:#1a1a1a;white-space:pre;">NO</div>
<div style="position:absolute;left:1200.88px;top:250.00px;font-size:12px;line-height:20px;color:#1a1a1a;white-space:pre;">NO</div>
<svg style="position:absolute;left:82px;top:249px;" width="5" height="5" viewBox="0 0 5 5"><path d="M0 0h5L0 5z" fill="#1E8A1E"/></svg>
<svg style="position:absolute;left:627px;top:249px;" width="5" height="5" viewBox="0 0 5 5"><path d="M0 0h5L0 5z" fill="#1E8A1E"/></svg>
<svg style="position:absolute;left:708px;top:249px;" width="5" height="5" viewBox="0 0 5 5"><path d="M0 0h5L0 5z" fill="#1E8A1E"/></svg>
<div style="position:absolute;left:26px;top:269px;width:1310px;height:19px;background:#DDEBF7;"></div>
<div style="position:absolute;left:1337px;top:269px;width:7px;height:19px;background:#fff;"></div>
<div style="position:absolute;left:26px;top:288px;width:1310px;height:1px;background:#9BC2E6;"></div>
<div style="position:absolute;left:0px;top:288px;width:25px;height:1px;background:#D4D4D4;"></div>
<div style="position:absolute;left:1337px;top:288px;width:7px;height:1px;background:#D4D4D4;"></div>
<div style="position:absolute;left:3.28px;top:270.00px;font-size:12px;line-height:20px;color:#444;white-space:pre;letter-spacing:-0.416px;">128</div>
<div style="position:absolute;left:58.13px;top:270.00px;font-size:12px;line-height:20px;color:#1a1a1a;white-space:pre;letter-spacing:0.478px;">127</div>
<div style="position:absolute;left:83.88px;top:270.00px;font-size:12px;line-height:20px;color:#1a1a1a;white-space:pre;letter-spacing:0.357px;">1712853276</div>
<div style="position:absolute;left:165.88px;top:270.00px;font-size:12px;line-height:20px;color:#1a1a1a;white-space:pre;letter-spacing:-0.049px;">ARROYO MORALES</div>
<div style="position:absolute;left:330.88px;top:270.00px;font-size:12px;line-height:20px;color:#1a1a1a;white-space:pre;letter-spacing:0.373px;">TANIA VERONICA</div>
<div style="position:absolute;left:479.88px;top:270.00px;font-size:12px;line-height:20px;color:#1a1a1a;white-space:pre;letter-spacing:0.625px;">LA BOCANA</div>
<div style="position:absolute;left:628.88px;top:270.00px;font-size:12px;line-height:20px;color:#1a1a1a;white-space:pre;letter-spacing:0.357px;">0963237960</div>
<div style="position:absolute;left:748.00px;top:270.00px;font-size:12px;line-height:20px;color:#1a1a1a;white-space:pre;letter-spacing:0.633px;">20</div>
<div style="position:absolute;left:922.88px;top:270.00px;font-size:12px;line-height:20px;color:#1a1a1a;white-space:pre;letter-spacing:-0.039px;">SIN PAPELETA</div>
<div style="position:absolute;left:1065.88px;top:270.00px;font-size:12px;line-height:20px;color:#1a1a1a;white-space:pre;">NO</div>
<div style="position:absolute;left:1200.88px;top:270.00px;font-size:12px;line-height:20px;color:#1a1a1a;white-space:pre;">NO</div>
<svg style="position:absolute;left:82px;top:269px;" width="5" height="5" viewBox="0 0 5 5"><path d="M0 0h5L0 5z" fill="#1E8A1E"/></svg>
<svg style="position:absolute;left:627px;top:269px;" width="5" height="5" viewBox="0 0 5 5"><path d="M0 0h5L0 5z" fill="#1E8A1E"/></svg>
<svg style="position:absolute;left:708px;top:269px;" width="5" height="5" viewBox="0 0 5 5"><path d="M0 0h5L0 5z" fill="#1E8A1E"/></svg>
<div style="position:absolute;left:81px;top:289px;width:1px;height:19px;background:#D4D4D4;"></div>
<div style="position:absolute;left:163px;top:289px;width:1px;height:19px;background:#D4D4D4;"></div>
<div style="position:absolute;left:328px;top:289px;width:1px;height:19px;background:#D4D4D4;"></div>
<div style="position:absolute;left:477px;top:289px;width:1px;height:19px;background:#D4D4D4;"></div>
<div style="position:absolute;left:626px;top:289px;width:1px;height:19px;background:#D4D4D4;"></div>
<div style="position:absolute;left:707px;top:289px;width:1px;height:19px;background:#D4D4D4;"></div>
<div style="position:absolute;left:801px;top:289px;width:1px;height:19px;background:#D4D4D4;"></div>
<div style="position:absolute;left:920px;top:289px;width:1px;height:19px;background:#D4D4D4;"></div>
<div style="position:absolute;left:1063px;top:289px;width:1px;height:19px;background:#D4D4D4;"></div>
<div style="position:absolute;left:1198px;top:289px;width:1px;height:19px;background:#D4D4D4;"></div>
<div style="position:absolute;left:1337px;top:289px;width:7px;height:19px;background:#fff;"></div>
<div style="position:absolute;left:26px;top:308px;width:1310px;height:1px;background:#9BC2E6;"></div>
<div style="position:absolute;left:0px;top:308px;width:25px;height:1px;background:#D4D4D4;"></div>
<div style="position:absolute;left:1337px;top:308px;width:7px;height:1px;background:#D4D4D4;"></div>
<div style="position:absolute;left:3.28px;top:290.00px;font-size:12px;line-height:20px;color:#444;white-space:pre;letter-spacing:-0.416px;">129</div>
<div style="position:absolute;left:58.13px;top:290.00px;font-size:12px;line-height:20px;color:#1a1a1a;white-space:pre;letter-spacing:0.478px;">128</div>
<div style="position:absolute;left:83.88px;top:290.00px;font-size:12px;line-height:20px;color:#1a1a1a;white-space:pre;letter-spacing:0.357px;">1701820571</div>
<div style="position:absolute;left:165.88px;top:290.00px;font-size:12px;line-height:20px;color:#1a1a1a;white-space:pre;letter-spacing:0.175px;">CAMPOVERDE CELI</div>
<div style="position:absolute;left:330.88px;top:290.00px;font-size:12px;line-height:20px;color:#1a1a1a;white-space:pre;letter-spacing:0.123px;">MIGUEL</div>
<div style="position:absolute;left:479.88px;top:290.00px;font-size:12px;line-height:20px;color:#1a1a1a;white-space:pre;letter-spacing:0.185px;">CRISTOBAL COLON</div>
<div style="position:absolute;left:628.88px;top:290.00px;font-size:12px;line-height:20px;color:#1a1a1a;white-space:pre;letter-spacing:0.357px;">0959823674</div>
<div style="position:absolute;left:748.00px;top:290.00px;font-size:12px;line-height:20px;color:#1a1a1a;white-space:pre;letter-spacing:0.633px;">20</div>
<div style="position:absolute;left:922.88px;top:290.00px;font-size:12px;line-height:20px;color:#1a1a1a;white-space:pre;letter-spacing:-0.039px;">SIN PAPELETA</div>
<div style="position:absolute;left:1065.88px;top:290.00px;font-size:12px;line-height:20px;color:#1a1a1a;white-space:pre;">NO</div>
<div style="position:absolute;left:1200.88px;top:290.00px;font-size:12px;line-height:20px;color:#1a1a1a;white-space:pre;">NO</div>
<svg style="position:absolute;left:82px;top:289px;" width="5" height="5" viewBox="0 0 5 5"><path d="M0 0h5L0 5z" fill="#1E8A1E"/></svg>
<svg style="position:absolute;left:627px;top:289px;" width="5" height="5" viewBox="0 0 5 5"><path d="M0 0h5L0 5z" fill="#1E8A1E"/></svg>
<svg style="position:absolute;left:708px;top:289px;" width="5" height="5" viewBox="0 0 5 5"><path d="M0 0h5L0 5z" fill="#1E8A1E"/></svg>
<div style="position:absolute;left:26px;top:309px;width:1310px;height:39px;background:#DDEBF7;"></div>
<div style="position:absolute;left:1337px;top:309px;width:7px;height:39px;background:#fff;"></div>
<div style="position:absolute;left:26px;top:348px;width:1310px;height:1px;background:#9BC2E6;"></div>
<div style="position:absolute;left:0px;top:348px;width:25px;height:1px;background:#D4D4D4;"></div>
<div style="position:absolute;left:1337px;top:348px;width:7px;height:1px;background:#D4D4D4;"></div>
<div style="position:absolute;left:3.28px;top:330.00px;font-size:12px;line-height:20px;color:#444;white-space:pre;letter-spacing:-0.416px;">130</div>
<div style="position:absolute;left:58.13px;top:320.00px;font-size:12px;line-height:20px;color:#1a1a1a;white-space:pre;letter-spacing:0.478px;">129</div>
<div style="position:absolute;left:83.88px;top:320.00px;font-size:12px;line-height:20px;color:#1a1a1a;white-space:pre;letter-spacing:0.357px;">1713183810</div>
<div style="position:absolute;left:165.88px;top:320.00px;font-size:12px;line-height:20px;color:#1a1a1a;white-space:pre;letter-spacing:0.570px;">GARCIA</div>
<div style="position:absolute;left:330.88px;top:320.00px;font-size:12px;line-height:20px;color:#1a1a1a;white-space:pre;letter-spacing:0.449px;">NANCY ROCIO</div>
<div style="position:absolute;left:479.88px;top:320.00px;font-size:12px;line-height:20px;color:#1a1a1a;white-space:pre;letter-spacing:0.185px;">CRISTOBAL COLON</div>
<div style="position:absolute;left:628.88px;top:310.00px;font-size:12px;line-height:20px;color:#1a1a1a;white-space:pre;letter-spacing:0.513px;">0939754160/</div>
<div style="position:absolute;left:628.88px;top:330.00px;font-size:12px;line-height:20px;color:#1a1a1a;white-space:pre;letter-spacing:0.472px;">023727116</div>
<div style="position:absolute;left:748.00px;top:320.00px;font-size:12px;line-height:20px;color:#1a1a1a;white-space:pre;letter-spacing:0.633px;">20</div>
<div style="position:absolute;left:922.88px;top:320.00px;font-size:12px;line-height:20px;color:#1a1a1a;white-space:pre;letter-spacing:-0.039px;">SIN PAPELETA</div>
<div style="position:absolute;left:1065.88px;top:320.00px;font-size:12px;line-height:20px;color:#1a1a1a;white-space:pre;">NO</div>
<div style="position:absolute;left:1200.88px;top:320.00px;font-size:12px;line-height:20px;color:#1a1a1a;white-space:pre;">NO</div>
<svg style="position:absolute;left:82px;top:309px;" width="5" height="5" viewBox="0 0 5 5"><path d="M0 0h5L0 5z" fill="#1E8A1E"/></svg>
<svg style="position:absolute;left:708px;top:309px;" width="5" height="5" viewBox="0 0 5 5"><path d="M0 0h5L0 5z" fill="#1E8A1E"/></svg>
<div style="position:absolute;left:81px;top:349px;width:1px;height:19px;background:#D4D4D4;"></div>
<div style="position:absolute;left:163px;top:349px;width:1px;height:19px;background:#D4D4D4;"></div>
<div style="position:absolute;left:328px;top:349px;width:1px;height:19px;background:#D4D4D4;"></div>
<div style="position:absolute;left:477px;top:349px;width:1px;height:19px;background:#D4D4D4;"></div>
<div style="position:absolute;left:626px;top:349px;width:1px;height:19px;background:#D4D4D4;"></div>
<div style="position:absolute;left:707px;top:349px;width:1px;height:19px;background:#D4D4D4;"></div>
<div style="position:absolute;left:801px;top:349px;width:1px;height:19px;background:#D4D4D4;"></div>
<div style="position:absolute;left:920px;top:349px;width:1px;height:19px;background:#D4D4D4;"></div>
<div style="position:absolute;left:1063px;top:349px;width:1px;height:19px;background:#D4D4D4;"></div>
<div style="position:absolute;left:1198px;top:349px;width:1px;height:19px;background:#D4D4D4;"></div>
<div style="position:absolute;left:1337px;top:349px;width:7px;height:19px;background:#fff;"></div>
<div style="position:absolute;left:26px;top:368px;width:1310px;height:1px;background:#9BC2E6;"></div>
<div style="position:absolute;left:0px;top:368px;width:25px;height:1px;background:#D4D4D4;"></div>
<div style="position:absolute;left:1337px;top:368px;width:7px;height:1px;background:#D4D4D4;"></div>
<div style="position:absolute;left:3.28px;top:350.00px;font-size:12px;line-height:20px;color:#444;white-space:pre;letter-spacing:-0.416px;">131</div>
<div style="position:absolute;left:58.13px;top:350.00px;font-size:12px;line-height:20px;color:#1a1a1a;white-space:pre;letter-spacing:0.478px;">130</div>
<div style="position:absolute;left:83.88px;top:350.00px;font-size:12px;line-height:20px;color:#1a1a1a;white-space:pre;letter-spacing:0.357px;">1705262770</div>
<div style="position:absolute;left:165.88px;top:350.00px;font-size:12px;line-height:20px;color:#1a1a1a;white-space:pre;letter-spacing:-0.035px;">TROCHEZ DAGUA</div>
<div style="position:absolute;left:330.88px;top:350.00px;font-size:12px;line-height:20px;color:#1a1a1a;white-space:pre;letter-spacing:0.377px;">GERONIMO</div>
<div style="position:absolute;left:628.88px;top:350.00px;font-size:12px;line-height:20px;color:#1a1a1a;white-space:pre;letter-spacing:0.357px;">0992400708</div>
<div style="position:absolute;left:748.00px;top:350.00px;font-size:12px;line-height:20px;color:#1a1a1a;white-space:pre;letter-spacing:0.633px;">20</div>
<div style="position:absolute;left:1065.88px;top:350.00px;font-size:12px;line-height:20px;color:#1a1a1a;white-space:pre;">NO</div>
<div style="position:absolute;left:1200.88px;top:350.00px;font-size:12px;line-height:20px;color:#1a1a1a;white-space:pre;">NO</div>
<svg style="position:absolute;left:82px;top:349px;" width="5" height="5" viewBox="0 0 5 5"><path d="M0 0h5L0 5z" fill="#1E8A1E"/></svg>
<svg style="position:absolute;left:627px;top:349px;" width="5" height="5" viewBox="0 0 5 5"><path d="M0 0h5L0 5z" fill="#1E8A1E"/></svg>
<svg style="position:absolute;left:708px;top:349px;" width="5" height="5" viewBox="0 0 5 5"><path d="M0 0h5L0 5z" fill="#1E8A1E"/></svg>
<div style="position:absolute;left:26px;top:369px;width:1310px;height:19px;background:#DDEBF7;"></div>
<div style="position:absolute;left:1337px;top:369px;width:7px;height:19px;background:#fff;"></div>
<div style="position:absolute;left:26px;top:388px;width:1310px;height:1px;background:#9BC2E6;"></div>
<div style="position:absolute;left:0px;top:388px;width:25px;height:1px;background:#D4D4D4;"></div>
<div style="position:absolute;left:1337px;top:388px;width:7px;height:1px;background:#D4D4D4;"></div>
<div style="position:absolute;left:3.28px;top:370.00px;font-size:12px;line-height:20px;color:#444;white-space:pre;letter-spacing:-0.416px;">132</div>
<div style="position:absolute;left:58.13px;top:370.00px;font-size:12px;line-height:20px;color:#1a1a1a;white-space:pre;letter-spacing:0.478px;">131</div>
<div style="position:absolute;left:83.88px;top:370.00px;font-size:12px;line-height:20px;color:#1a1a1a;white-space:pre;letter-spacing:0.456px;">0801132085</div>
<div style="position:absolute;left:165.88px;top:370.00px;font-size:12px;line-height:20px;color:#1a1a1a;white-space:pre;letter-spacing:0.240px;">MORA VERGARA</div>
<div style="position:absolute;left:330.88px;top:370.00px;font-size:12px;line-height:20px;color:#1a1a1a;white-space:pre;letter-spacing:-0.287px;">LUIS ALBERTO</div>
<div style="position:absolute;left:479.88px;top:370.00px;font-size:12px;line-height:20px;color:#1a1a1a;white-space:pre;letter-spacing:0.185px;">CRISTOBAL COLON</div>
<div style="position:absolute;left:628.88px;top:370.00px;font-size:12px;line-height:20px;color:#1a1a1a;white-space:pre;letter-spacing:0.357px;">0990722530</div>
<div style="position:absolute;left:748.00px;top:370.00px;font-size:12px;line-height:20px;color:#1a1a1a;white-space:pre;letter-spacing:0.633px;">20</div>
<div style="position:absolute;left:1065.88px;top:370.00px;font-size:12px;line-height:20px;color:#1a1a1a;white-space:pre;">NO</div>
<div style="position:absolute;left:1200.88px;top:370.00px;font-size:12px;line-height:20px;color:#1a1a1a;white-space:pre;">NO</div>
<svg style="position:absolute;left:82px;top:369px;" width="5" height="5" viewBox="0 0 5 5"><path d="M0 0h5L0 5z" fill="#1E8A1E"/></svg>
<svg style="position:absolute;left:627px;top:369px;" width="5" height="5" viewBox="0 0 5 5"><path d="M0 0h5L0 5z" fill="#1E8A1E"/></svg>
<svg style="position:absolute;left:708px;top:369px;" width="5" height="5" viewBox="0 0 5 5"><path d="M0 0h5L0 5z" fill="#1E8A1E"/></svg>
<div style="position:absolute;left:81px;top:389px;width:1px;height:19px;background:#D4D4D4;"></div>
<div style="position:absolute;left:163px;top:389px;width:1px;height:19px;background:#D4D4D4;"></div>
<div style="position:absolute;left:328px;top:389px;width:1px;height:19px;background:#D4D4D4;"></div>
<div style="position:absolute;left:477px;top:389px;width:1px;height:19px;background:#D4D4D4;"></div>
<div style="position:absolute;left:626px;top:389px;width:1px;height:19px;background:#D4D4D4;"></div>
<div style="position:absolute;left:707px;top:389px;width:1px;height:19px;background:#D4D4D4;"></div>
<div style="position:absolute;left:801px;top:389px;width:1px;height:19px;background:#D4D4D4;"></div>
<div style="position:absolute;left:920px;top:389px;width:1px;height:19px;background:#D4D4D4;"></div>
<div style="position:absolute;left:1063px;top:389px;width:1px;height:19px;background:#D4D4D4;"></div>
<div style="position:absolute;left:1198px;top:389px;width:1px;height:19px;background:#D4D4D4;"></div>
<div style="position:absolute;left:1337px;top:389px;width:7px;height:19px;background:#fff;"></div>
<div style="position:absolute;left:26px;top:408px;width:1310px;height:1px;background:#9BC2E6;"></div>
<div style="position:absolute;left:0px;top:408px;width:25px;height:1px;background:#D4D4D4;"></div>
<div style="position:absolute;left:1337px;top:408px;width:7px;height:1px;background:#D4D4D4;"></div>
<div style="position:absolute;left:3.28px;top:390.00px;font-size:12px;line-height:20px;color:#444;white-space:pre;letter-spacing:-0.416px;">133</div>
<div style="position:absolute;left:58.13px;top:390.00px;font-size:12px;line-height:20px;color:#1a1a1a;white-space:pre;letter-spacing:0.478px;">132</div>
<div style="position:absolute;left:83.88px;top:390.00px;font-size:12px;line-height:20px;color:#1a1a1a;white-space:pre;letter-spacing:0.357px;">1704317013</div>
<div style="position:absolute;left:165.88px;top:390.00px;font-size:12px;line-height:20px;color:#1a1a1a;white-space:pre;letter-spacing:0.214px;">SOLANO VALVERDE</div>
<div style="position:absolute;left:330.88px;top:390.00px;font-size:12px;line-height:20px;color:#1a1a1a;white-space:pre;letter-spacing:-0.235px;">VICTOT FLORES</div>
<div style="position:absolute;left:479.88px;top:390.00px;font-size:12px;line-height:20px;color:#1a1a1a;white-space:pre;letter-spacing:0.185px;">CRISTOBAL COLON</div>
<div style="position:absolute;left:628.88px;top:390.00px;font-size:12px;line-height:20px;color:#1a1a1a;white-space:pre;letter-spacing:0.357px;">0999383997</div>
<div style="position:absolute;left:748.00px;top:390.00px;font-size:12px;line-height:20px;color:#1a1a1a;white-space:pre;letter-spacing:0.633px;">20</div>
<div style="position:absolute;left:803.88px;top:390.00px;font-size:12px;line-height:20px;color:#1a1a1a;white-space:pre;">SI</div>
<div style="position:absolute;left:1065.88px;top:390.00px;font-size:12px;line-height:20px;color:#1a1a1a;white-space:pre;">NO</div>
<div style="position:absolute;left:1200.88px;top:390.00px;font-size:12px;line-height:20px;color:#1a1a1a;white-space:pre;">NO</div>
<svg style="position:absolute;left:82px;top:389px;" width="5" height="5" viewBox="0 0 5 5"><path d="M0 0h5L0 5z" fill="#1E8A1E"/></svg>
<svg style="position:absolute;left:627px;top:389px;" width="5" height="5" viewBox="0 0 5 5"><path d="M0 0h5L0 5z" fill="#1E8A1E"/></svg>
<svg style="position:absolute;left:708px;top:389px;" width="5" height="5" viewBox="0 0 5 5"><path d="M0 0h5L0 5z" fill="#1E8A1E"/></svg>
<div style="position:absolute;left:26px;top:409px;width:1310px;height:19px;background:#DDEBF7;"></div>
<div style="position:absolute;left:1337px;top:409px;width:7px;height:19px;background:#fff;"></div>
<div style="position:absolute;left:26px;top:428px;width:1310px;height:1px;background:#9BC2E6;"></div>
<div style="position:absolute;left:0px;top:428px;width:25px;height:1px;background:#D4D4D4;"></div>
<div style="position:absolute;left:1337px;top:428px;width:7px;height:1px;background:#D4D4D4;"></div>
<div style="position:absolute;left:3.28px;top:410.00px;font-size:12px;line-height:20px;color:#444;white-space:pre;letter-spacing:-0.416px;">134</div>
<div style="position:absolute;left:58.13px;top:410.00px;font-size:12px;line-height:20px;color:#1a1a1a;white-space:pre;letter-spacing:0.478px;">133</div>
<div style="position:absolute;left:83.88px;top:410.00px;font-size:12px;line-height:20px;color:#1a1a1a;white-space:pre;letter-spacing:0.357px;">1721248944</div>
<div style="position:absolute;left:165.88px;top:410.00px;font-size:12px;line-height:20px;color:#1a1a1a;white-space:pre;letter-spacing:0.453px;">COVEÑA MANTUANO</div>
<div style="position:absolute;left:330.88px;top:410.00px;font-size:12px;line-height:20px;color:#1a1a1a;white-space:pre;letter-spacing:0.133px;">VERONICA MARLENE</div>
<div style="position:absolute;left:479.88px;top:410.00px;font-size:12px;line-height:20px;color:#1a1a1a;white-space:pre;letter-spacing:0.258px;">MANTIAL DEL VALLE</div>
<div style="position:absolute;left:628.88px;top:410.00px;font-size:12px;line-height:20px;color:#1a1a1a;white-space:pre;letter-spacing:0.357px;">0969745198</div>
<div style="position:absolute;left:748.00px;top:410.00px;font-size:12px;line-height:20px;color:#1a1a1a;white-space:pre;letter-spacing:0.633px;">20</div>
<div style="position:absolute;left:922.88px;top:410.00px;font-size:12px;line-height:20px;color:#1a1a1a;white-space:pre;letter-spacing:-0.039px;">SIN PAPELETA</div>
<div style="position:absolute;left:1065.88px;top:410.00px;font-size:12px;line-height:20px;color:#1a1a1a;white-space:pre;">NO</div>
<div style="position:absolute;left:1200.88px;top:410.00px;font-size:12px;line-height:20px;color:#1a1a1a;white-space:pre;">NO</div>
<svg style="position:absolute;left:82px;top:409px;" width="5" height="5" viewBox="0 0 5 5"><path d="M0 0h5L0 5z" fill="#1E8A1E"/></svg>
<svg style="position:absolute;left:627px;top:409px;" width="5" height="5" viewBox="0 0 5 5"><path d="M0 0h5L0 5z" fill="#1E8A1E"/></svg>
<svg style="position:absolute;left:708px;top:409px;" width="5" height="5" viewBox="0 0 5 5"><path d="M0 0h5L0 5z" fill="#1E8A1E"/></svg>
<div style="position:absolute;left:81px;top:429px;width:1px;height:19px;background:#D4D4D4;"></div>
<div style="position:absolute;left:163px;top:429px;width:1px;height:19px;background:#D4D4D4;"></div>
<div style="position:absolute;left:328px;top:429px;width:1px;height:19px;background:#D4D4D4;"></div>
<div style="position:absolute;left:477px;top:429px;width:1px;height:19px;background:#D4D4D4;"></div>
<div style="position:absolute;left:626px;top:429px;width:1px;height:19px;background:#D4D4D4;"></div>
<div style="position:absolute;left:707px;top:429px;width:1px;height:19px;background:#D4D4D4;"></div>
<div style="position:absolute;left:801px;top:429px;width:1px;height:19px;background:#D4D4D4;"></div>
<div style="position:absolute;left:920px;top:429px;width:1px;height:19px;background:#D4D4D4;"></div>
<div style="position:absolute;left:1063px;top:429px;width:1px;height:19px;background:#D4D4D4;"></div>
<div style="position:absolute;left:1198px;top:429px;width:1px;height:19px;background:#D4D4D4;"></div>
<div style="position:absolute;left:1337px;top:429px;width:7px;height:19px;background:#fff;"></div>
<div style="position:absolute;left:26px;top:448px;width:1310px;height:1px;background:#9BC2E6;"></div>
<div style="position:absolute;left:0px;top:448px;width:25px;height:1px;background:#D4D4D4;"></div>
<div style="position:absolute;left:1337px;top:448px;width:7px;height:1px;background:#D4D4D4;"></div>
<div style="position:absolute;left:3.28px;top:430.00px;font-size:12px;line-height:20px;color:#444;white-space:pre;letter-spacing:-0.416px;">135</div>
<div style="position:absolute;left:58.13px;top:430.00px;font-size:12px;line-height:20px;color:#1a1a1a;white-space:pre;letter-spacing:0.478px;">134</div>
<div style="position:absolute;left:83.88px;top:430.00px;font-size:12px;line-height:20px;color:#1a1a1a;white-space:pre;letter-spacing:0.357px;">1307934990</div>
<div style="position:absolute;left:165.88px;top:430.00px;font-size:12px;line-height:20px;color:#1a1a1a;white-space:pre;letter-spacing:0.105px;">MORANTE CEDEÑO</div>
<div style="position:absolute;left:330.88px;top:430.00px;font-size:12px;line-height:20px;color:#1a1a1a;white-space:pre;letter-spacing:0.047px;">CLEOPATRA ISABEL</div>
<div style="position:absolute;left:479.88px;top:430.00px;font-size:12px;line-height:20px;color:#1a1a1a;white-space:pre;letter-spacing:0.019px;">CHIGUILPE</div>
<div style="position:absolute;left:628.88px;top:430.00px;font-size:12px;line-height:20px;color:#1a1a1a;white-space:pre;letter-spacing:0.357px;">0961832956</div>
<div style="position:absolute;left:748.00px;top:430.00px;font-size:12px;line-height:20px;color:#1a1a1a;white-space:pre;letter-spacing:0.633px;">20</div>
<div style="position:absolute;left:1065.88px;top:430.00px;font-size:12px;line-height:20px;color:#1a1a1a;white-space:pre;">NO</div>
<div style="position:absolute;left:1200.88px;top:430.00px;font-size:12px;line-height:20px;color:#1a1a1a;white-space:pre;">NO</div>
<svg style="position:absolute;left:82px;top:429px;" width="5" height="5" viewBox="0 0 5 5"><path d="M0 0h5L0 5z" fill="#1E8A1E"/></svg>
<svg style="position:absolute;left:627px;top:429px;" width="5" height="5" viewBox="0 0 5 5"><path d="M0 0h5L0 5z" fill="#1E8A1E"/></svg>
<svg style="position:absolute;left:708px;top:429px;" width="5" height="5" viewBox="0 0 5 5"><path d="M0 0h5L0 5z" fill="#1E8A1E"/></svg>
<div style="position:absolute;left:26px;top:449px;width:1310px;height:19px;background:#DDEBF7;"></div>
<div style="position:absolute;left:1337px;top:449px;width:7px;height:19px;background:#fff;"></div>
<div style="position:absolute;left:26px;top:468px;width:1310px;height:1px;background:#9BC2E6;"></div>
<div style="position:absolute;left:0px;top:468px;width:25px;height:1px;background:#D4D4D4;"></div>
<div style="position:absolute;left:1337px;top:468px;width:7px;height:1px;background:#D4D4D4;"></div>
<div style="position:absolute;left:3.28px;top:450.00px;font-size:12px;line-height:20px;color:#444;white-space:pre;letter-spacing:-0.416px;">136</div>
<div style="position:absolute;left:58.13px;top:450.00px;font-size:12px;line-height:20px;color:#1a1a1a;white-space:pre;letter-spacing:0.478px;">135</div>
<div style="position:absolute;left:83.88px;top:450.00px;font-size:12px;line-height:20px;color:#1a1a1a;white-space:pre;letter-spacing:0.357px;">2300527690</div>
<div style="position:absolute;left:165.88px;top:450.00px;font-size:12px;line-height:20px;color:#1a1a1a;white-space:pre;letter-spacing:0.057px;">LLARENA ARIAS</div>
<div style="position:absolute;left:330.88px;top:450.00px;font-size:12px;line-height:20px;color:#1a1a1a;white-space:pre;letter-spacing:0.343px;">DIANA GISELA</div>
<div style="position:absolute;left:479.88px;top:450.00px;font-size:12px;line-height:20px;color:#1a1a1a;white-space:pre;letter-spacing:0.019px;">CHIGUILPE</div>
<div style="position:absolute;left:628.88px;top:450.00px;font-size:12px;line-height:20px;color:#1a1a1a;white-space:pre;letter-spacing:0.357px;">0992028603</div>
<div style="position:absolute;left:748.00px;top:450.00px;font-size:12px;line-height:20px;color:#1a1a1a;white-space:pre;letter-spacing:0.633px;">20</div>
<div style="position:absolute;left:1065.88px;top:450.00px;font-size:12px;line-height:20px;color:#1a1a1a;white-space:pre;">NO</div>
<div style="position:absolute;left:1200.88px;top:450.00px;font-size:12px;line-height:20px;color:#1a1a1a;white-space:pre;">NO</div>
<svg style="position:absolute;left:82px;top:449px;" width="5" height="5" viewBox="0 0 5 5"><path d="M0 0h5L0 5z" fill="#1E8A1E"/></svg>
<svg style="position:absolute;left:627px;top:449px;" width="5" height="5" viewBox="0 0 5 5"><path d="M0 0h5L0 5z" fill="#1E8A1E"/></svg>
<svg style="position:absolute;left:708px;top:449px;" width="5" height="5" viewBox="0 0 5 5"><path d="M0 0h5L0 5z" fill="#1E8A1E"/></svg>
<div style="position:absolute;left:81px;top:469px;width:1px;height:19px;background:#D4D4D4;"></div>
<div style="position:absolute;left:163px;top:469px;width:1px;height:19px;background:#D4D4D4;"></div>
<div style="position:absolute;left:328px;top:469px;width:1px;height:19px;background:#D4D4D4;"></div>
<div style="position:absolute;left:477px;top:469px;width:1px;height:19px;background:#D4D4D4;"></div>
<div style="position:absolute;left:626px;top:469px;width:1px;height:19px;background:#D4D4D4;"></div>
<div style="position:absolute;left:707px;top:469px;width:1px;height:19px;background:#D4D4D4;"></div>
<div style="position:absolute;left:801px;top:469px;width:1px;height:19px;background:#D4D4D4;"></div>
<div style="position:absolute;left:920px;top:469px;width:1px;height:19px;background:#D4D4D4;"></div>
<div style="position:absolute;left:1063px;top:469px;width:1px;height:19px;background:#D4D4D4;"></div>
<div style="position:absolute;left:1198px;top:469px;width:1px;height:19px;background:#D4D4D4;"></div>
<div style="position:absolute;left:1337px;top:469px;width:7px;height:19px;background:#fff;"></div>
<div style="position:absolute;left:26px;top:488px;width:1310px;height:1px;background:#9BC2E6;"></div>
<div style="position:absolute;left:0px;top:488px;width:25px;height:1px;background:#D4D4D4;"></div>
<div style="position:absolute;left:1337px;top:488px;width:7px;height:1px;background:#D4D4D4;"></div>
<div style="position:absolute;left:3.28px;top:470.00px;font-size:12px;line-height:20px;color:#444;white-space:pre;letter-spacing:-0.416px;">137</div>
<div style="position:absolute;left:58.13px;top:470.00px;font-size:12px;line-height:20px;color:#1a1a1a;white-space:pre;letter-spacing:0.478px;">136</div>
<div style="position:absolute;left:83.88px;top:470.00px;font-size:12px;line-height:20px;color:#1a1a1a;white-space:pre;letter-spacing:0.357px;">1722476437</div>
<div style="position:absolute;left:165.88px;top:470.00px;font-size:12px;line-height:20px;color:#1a1a1a;white-space:pre;letter-spacing:0.118px;">SANCHEZ GARCIA</div>
<div style="position:absolute;left:330.88px;top:470.00px;font-size:12px;line-height:20px;color:#1a1a1a;white-space:pre;letter-spacing:0.106px;">ANDREA KARINA</div>
<div style="position:absolute;left:479.88px;top:470.00px;font-size:12px;line-height:20px;color:#1a1a1a;white-space:pre;letter-spacing:0.019px;">CHIGUILPE</div>
<div style="position:absolute;left:628.88px;top:470.00px;font-size:12px;line-height:20px;color:#1a1a1a;white-space:pre;letter-spacing:0.357px;">0963843171</div>
<div style="position:absolute;left:748.00px;top:470.00px;font-size:12px;line-height:20px;color:#1a1a1a;white-space:pre;letter-spacing:0.633px;">20</div>
<div style="position:absolute;left:1065.88px;top:470.00px;font-size:12px;line-height:20px;color:#1a1a1a;white-space:pre;">NO</div>
<div style="position:absolute;left:1200.88px;top:470.00px;font-size:12px;line-height:20px;color:#1a1a1a;white-space:pre;">NO</div>
<svg style="position:absolute;left:82px;top:469px;" width="5" height="5" viewBox="0 0 5 5"><path d="M0 0h5L0 5z" fill="#1E8A1E"/></svg>
<svg style="position:absolute;left:627px;top:469px;" width="5" height="5" viewBox="0 0 5 5"><path d="M0 0h5L0 5z" fill="#1E8A1E"/></svg>
<svg style="position:absolute;left:708px;top:469px;" width="5" height="5" viewBox="0 0 5 5"><path d="M0 0h5L0 5z" fill="#1E8A1E"/></svg>
<div style="position:absolute;left:26px;top:489px;width:1310px;height:19px;background:#DDEBF7;"></div>
<div style="position:absolute;left:1337px;top:489px;width:7px;height:19px;background:#fff;"></div>
<div style="position:absolute;left:26px;top:508px;width:1310px;height:1px;background:#9BC2E6;"></div>
<div style="position:absolute;left:0px;top:508px;width:25px;height:1px;background:#D4D4D4;"></div>
<div style="position:absolute;left:1337px;top:508px;width:7px;height:1px;background:#D4D4D4;"></div>
<div style="position:absolute;left:3.28px;top:490.00px;font-size:12px;line-height:20px;color:#444;white-space:pre;letter-spacing:-0.416px;">138</div>
<div style="position:absolute;left:58.13px;top:490.00px;font-size:12px;line-height:20px;color:#1a1a1a;white-space:pre;letter-spacing:0.478px;">137</div>
<div style="position:absolute;left:83.88px;top:490.00px;font-size:12px;line-height:20px;color:#1a1a1a;white-space:pre;letter-spacing:0.357px;">1714274105</div>
<div style="position:absolute;left:165.88px;top:490.00px;font-size:12px;line-height:20px;color:#1a1a1a;white-space:pre;letter-spacing:0.404px;">GARCIA ARTEAGA</div>
<div style="position:absolute;left:330.88px;top:490.00px;font-size:12px;line-height:20px;color:#1a1a1a;white-space:pre;letter-spacing:0.199px;">JUAN LADISLAO</div>
<div style="position:absolute;left:479.88px;top:490.00px;font-size:12px;line-height:20px;color:#1a1a1a;white-space:pre;letter-spacing:0.235px;">MIRADOR DE LA SELVA</div>
<div style="position:absolute;left:628.88px;top:490.00px;font-size:12px;line-height:20px;color:#1a1a1a;white-space:pre;letter-spacing:0.357px;">0991714051</div>
<div style="position:absolute;left:748.00px;top:490.00px;font-size:12px;line-height:20px;color:#1a1a1a;white-space:pre;letter-spacing:0.633px;">20</div>
<div style="position:absolute;left:922.88px;top:490.00px;font-size:12px;line-height:20px;color:#1a1a1a;white-space:pre;letter-spacing:-0.039px;">SIN PAPELETA</div>
<div style="position:absolute;left:1065.88px;top:490.00px;font-size:12px;line-height:20px;color:#1a1a1a;white-space:pre;">NO</div>
<div style="position:absolute;left:1200.88px;top:490.00px;font-size:12px;line-height:20px;color:#1a1a1a;white-space:pre;">NO</div>
<svg style="position:absolute;left:82px;top:489px;" width="5" height="5" viewBox="0 0 5 5"><path d="M0 0h5L0 5z" fill="#1E8A1E"/></svg>
<svg style="position:absolute;left:627px;top:489px;" width="5" height="5" viewBox="0 0 5 5"><path d="M0 0h5L0 5z" fill="#1E8A1E"/></svg>
<svg style="position:absolute;left:708px;top:489px;" width="5" height="5" viewBox="0 0 5 5"><path d="M0 0h5L0 5z" fill="#1E8A1E"/></svg>
<div style="position:absolute;left:81px;top:509px;width:1px;height:59px;background:#D4D4D4;"></div>
<div style="position:absolute;left:163px;top:509px;width:1px;height:59px;background:#D4D4D4;"></div>
<div style="position:absolute;left:328px;top:509px;width:1px;height:59px;background:#D4D4D4;"></div>
<div style="position:absolute;left:477px;top:509px;width:1px;height:59px;background:#D4D4D4;"></div>
<div style="position:absolute;left:626px;top:509px;width:1px;height:59px;background:#D4D4D4;"></div>
<div style="position:absolute;left:707px;top:509px;width:1px;height:59px;background:#D4D4D4;"></div>
<div style="position:absolute;left:801px;top:509px;width:1px;height:59px;background:#D4D4D4;"></div>
<div style="position:absolute;left:920px;top:509px;width:1px;height:59px;background:#D4D4D4;"></div>
<div style="position:absolute;left:1063px;top:509px;width:1px;height:59px;background:#D4D4D4;"></div>
<div style="position:absolute;left:1198px;top:509px;width:1px;height:59px;background:#D4D4D4;"></div>
<div style="position:absolute;left:1337px;top:509px;width:7px;height:59px;background:#fff;"></div>
<div style="position:absolute;left:26px;top:568px;width:1310px;height:1px;background:#9BC2E6;"></div>
<div style="position:absolute;left:0px;top:568px;width:25px;height:1px;background:#D4D4D4;"></div>
<div style="position:absolute;left:1337px;top:568px;width:7px;height:1px;background:#D4D4D4;"></div>
<div style="position:absolute;left:3.28px;top:550.00px;font-size:12px;line-height:20px;color:#444;white-space:pre;letter-spacing:-0.416px;">139</div>
<div style="position:absolute;left:58.13px;top:530.00px;font-size:12px;line-height:20px;color:#1a1a1a;white-space:pre;letter-spacing:0.478px;">138</div>
<div style="position:absolute;left:83.88px;top:530.00px;font-size:12px;line-height:20px;color:#1a1a1a;white-space:pre;letter-spacing:0.357px;">1707794499</div>
<div style="position:absolute;left:165.88px;top:530.00px;font-size:12px;line-height:20px;color:#1a1a1a;white-space:pre;letter-spacing:0.404px;">GARCIA ARTEAGA</div>
<div style="position:absolute;left:330.88px;top:530.00px;font-size:12px;line-height:20px;color:#1a1a1a;white-space:pre;letter-spacing:-0.252px;">CESAR BARBARO</div>
<div style="position:absolute;left:479.88px;top:530.00px;font-size:12px;line-height:20px;color:#1a1a1a;white-space:pre;letter-spacing:0.235px;">MIRADOR DE LA SELVA</div>
<div style="position:absolute;left:628.88px;top:530.00px;font-size:12px;line-height:20px;color:#1a1a1a;white-space:pre;letter-spacing:0.357px;">0991714051</div>
<div style="position:absolute;left:748.00px;top:530.00px;font-size:12px;line-height:20px;color:#1a1a1a;white-space:pre;letter-spacing:0.633px;">20</div>
<div style="position:absolute;left:922.88px;top:510.00px;font-size:12px;line-height:20px;color:#1a1a1a;white-space:pre;">SIN</div>
<div style="position:absolute;left:922.88px;top:530.00px;font-size:12px;line-height:20px;color:#1a1a1a;white-space:pre;letter-spacing:0.148px;">PAPELETA/HERMANO</div>
<div style="position:absolute;left:922.88px;top:550.00px;font-size:12px;line-height:20px;color:#1a1a1a;white-space:pre;letter-spacing:0.279px;">DE JUAN GARCIA</div>
<div style="position:absolute;left:1065.88px;top:530.00px;font-size:12px;line-height:20px;color:#1a1a1a;white-space:pre;">NO</div>
<div style="position:absolute;left:1200.88px;top:530.00px;font-size:12px;line-height:20px;color:#1a1a1a;white-space:pre;">NO</div>
<svg style="position:absolute;left:82px;top:509px;" width="5" height="5" viewBox="0 0 5 5"><path d="M0 0h5L0 5z" fill="#1E8A1E"/></svg>
<svg style="position:absolute;left:627px;top:509px;" width="5" height="5" viewBox="0 0 5 5"><path d="M0 0h5L0 5z" fill="#1E8A1E"/></svg>
<svg style="position:absolute;left:708px;top:509px;" width="5" height="5" viewBox="0 0 5 5"><path d="M0 0h5L0 5z" fill="#1E8A1E"/></svg>
<div style="position:absolute;left:26px;top:569px;width:1310px;height:19px;background:#DDEBF7;"></div>
<div style="position:absolute;left:1337px;top:569px;width:7px;height:19px;background:#fff;"></div>
<div style="position:absolute;left:26px;top:588px;width:1310px;height:1px;background:#9BC2E6;"></div>
<div style="position:absolute;left:0px;top:588px;width:25px;height:1px;background:#D4D4D4;"></div>
<div style="position:absolute;left:1337px;top:588px;width:7px;height:1px;background:#D4D4D4;"></div>
<div style="position:absolute;left:3.28px;top:570.00px;font-size:12px;line-height:20px;color:#444;white-space:pre;letter-spacing:-0.416px;">140</div>
<div style="position:absolute;left:58.13px;top:570.00px;font-size:12px;line-height:20px;color:#1a1a1a;white-space:pre;letter-spacing:0.478px;">139</div>
<div style="position:absolute;left:83.88px;top:570.00px;font-size:12px;line-height:20px;color:#1a1a1a;white-space:pre;letter-spacing:0.357px;">1712426517</div>
<div style="position:absolute;left:165.88px;top:570.00px;font-size:12px;line-height:20px;color:#1a1a1a;white-space:pre;letter-spacing:-0.030px;">VELIZ ZAMORA</div>
<div style="position:absolute;left:330.88px;top:570.00px;font-size:12px;line-height:20px;color:#1a1a1a;white-space:pre;letter-spacing:0.330px;">VERONICA LUCIA</div>
<div style="position:absolute;left:479.88px;top:570.00px;font-size:12px;line-height:20px;color:#1a1a1a;white-space:pre;letter-spacing:-0.203px;">9 DE OCTUBRE</div>
<div style="position:absolute;left:628.88px;top:570.00px;font-size:12px;line-height:20px;color:#1a1a1a;white-space:pre;letter-spacing:0.456px;">0959542811</div>
<div style="position:absolute;left:748.00px;top:570.00px;font-size:12px;line-height:20px;color:#1a1a1a;white-space:pre;letter-spacing:0.633px;">20</div>
<div style="position:absolute;left:1065.88px;top:570.00px;font-size:12px;line-height:20px;color:#1a1a1a;white-space:pre;">NO</div>
<div style="position:absolute;left:1200.88px;top:570.00px;font-size:12px;line-height:20px;color:#1a1a1a;white-space:pre;">NO</div>
<svg style="position:absolute;left:82px;top:569px;" width="5" height="5" viewBox="0 0 5 5"><path d="M0 0h5L0 5z" fill="#1E8A1E"/></svg>
<svg style="position:absolute;left:627px;top:569px;" width="5" height="5" viewBox="0 0 5 5"><path d="M0 0h5L0 5z" fill="#1E8A1E"/></svg>
<svg style="position:absolute;left:708px;top:569px;" width="5" height="5" viewBox="0 0 5 5"><path d="M0 0h5L0 5z" fill="#1E8A1E"/></svg>
<div style="position:absolute;left:81px;top:589px;width:1px;height:19px;background:#D4D4D4;"></div>
<div style="position:absolute;left:163px;top:589px;width:1px;height:19px;background:#D4D4D4;"></div>
<div style="position:absolute;left:328px;top:589px;width:1px;height:19px;background:#D4D4D4;"></div>
<div style="position:absolute;left:477px;top:589px;width:1px;height:19px;background:#D4D4D4;"></div>
<div style="position:absolute;left:626px;top:589px;width:1px;height:19px;background:#D4D4D4;"></div>
<div style="position:absolute;left:707px;top:589px;width:1px;height:19px;background:#D4D4D4;"></div>
<div style="position:absolute;left:801px;top:589px;width:1px;height:19px;background:#D4D4D4;"></div>
<div style="position:absolute;left:920px;top:589px;width:1px;height:19px;background:#D4D4D4;"></div>
<div style="position:absolute;left:1063px;top:589px;width:1px;height:19px;background:#D4D4D4;"></div>
<div style="position:absolute;left:1198px;top:589px;width:1px;height:19px;background:#D4D4D4;"></div>
<div style="position:absolute;left:1337px;top:589px;width:7px;height:19px;background:#fff;"></div>
<div style="position:absolute;left:26px;top:608px;width:1310px;height:1px;background:#9BC2E6;"></div>
<div style="position:absolute;left:0px;top:608px;width:25px;height:1px;background:#D4D4D4;"></div>
<div style="position:absolute;left:1337px;top:608px;width:7px;height:1px;background:#D4D4D4;"></div>
<div style="position:absolute;left:3.28px;top:590.00px;font-size:12px;line-height:20px;color:#444;white-space:pre;letter-spacing:-0.416px;">141</div>
<div style="position:absolute;left:58.13px;top:590.00px;font-size:12px;line-height:20px;color:#1a1a1a;white-space:pre;letter-spacing:0.478px;">140</div>
<div style="position:absolute;left:83.88px;top:590.00px;font-size:12px;line-height:20px;color:#1a1a1a;white-space:pre;letter-spacing:0.357px;">1312939430</div>
<div style="position:absolute;left:165.88px;top:590.00px;font-size:12px;line-height:20px;color:#1a1a1a;white-space:pre;letter-spacing:0.080px;">DUEÑASMARCILLO</div>
<div style="position:absolute;left:330.88px;top:590.00px;font-size:12px;line-height:20px;color:#1a1a1a;white-space:pre;letter-spacing:0.164px;">CARMEN EDITA</div>
<div style="position:absolute;left:479.88px;top:590.00px;font-size:12px;line-height:20px;color:#1a1a1a;white-space:pre;letter-spacing:-0.353px;">EL TRIUNFO</div>
<div style="position:absolute;left:628.88px;top:590.00px;font-size:12px;line-height:20px;color:#1a1a1a;white-space:pre;letter-spacing:0.357px;">0988899910</div>
<div style="position:absolute;left:748.00px;top:590.00px;font-size:12px;line-height:20px;color:#1a1a1a;white-space:pre;letter-spacing:0.633px;">20</div>
<div style="position:absolute;left:1065.88px;top:590.00px;font-size:12px;line-height:20px;color:#1a1a1a;white-space:pre;">NO</div>
<div style="position:absolute;left:1200.88px;top:590.00px;font-size:12px;line-height:20px;color:#1a1a1a;white-space:pre;">NO</div>
<svg style="position:absolute;left:82px;top:589px;" width="5" height="5" viewBox="0 0 5 5"><path d="M0 0h5L0 5z" fill="#1E8A1E"/></svg>
<svg style="position:absolute;left:627px;top:589px;" width="5" height="5" viewBox="0 0 5 5"><path d="M0 0h5L0 5z" fill="#1E8A1E"/></svg>
<svg style="position:absolute;left:708px;top:589px;" width="5" height="5" viewBox="0 0 5 5"><path d="M0 0h5L0 5z" fill="#1E8A1E"/></svg>
<div style="position:absolute;left:26px;top:609px;width:1310px;height:19px;background:#DDEBF7;"></div>
<div style="position:absolute;left:1337px;top:609px;width:7px;height:19px;background:#fff;"></div>
<div style="position:absolute;left:26px;top:628px;width:1310px;height:1px;background:#9BC2E6;"></div>
<div style="position:absolute;left:0px;top:628px;width:25px;height:1px;background:#D4D4D4;"></div>
<div style="position:absolute;left:1337px;top:628px;width:7px;height:1px;background:#D4D4D4;"></div>
<div style="position:absolute;left:3.28px;top:610.00px;font-size:12px;line-height:20px;color:#444;white-space:pre;letter-spacing:-0.416px;">142</div>
<div style="position:absolute;left:58.13px;top:610.00px;font-size:12px;line-height:20px;color:#1a1a1a;white-space:pre;letter-spacing:0.478px;">141</div>
<div style="position:absolute;left:83.88px;top:610.00px;font-size:12px;line-height:20px;color:#1a1a1a;white-space:pre;letter-spacing:0.357px;">1708409907</div>
<div style="position:absolute;left:165.88px;top:610.00px;font-size:12px;line-height:20px;color:#1a1a1a;white-space:pre;letter-spacing:0.536px;">VEGA</div>
<div style="position:absolute;left:330.88px;top:610.00px;font-size:12px;line-height:20px;color:#1a1a1a;white-space:pre;letter-spacing:-0.139px;">HUMBERTO FELICISIMO</div>
<div style="position:absolute;left:479.88px;top:610.00px;font-size:12px;line-height:20px;color:#1a1a1a;white-space:pre;letter-spacing:-0.353px;">EL TRIUNFO</div>
<div style="position:absolute;left:628.88px;top:610.00px;font-size:12px;line-height:20px;color:#1a1a1a;white-space:pre;letter-spacing:0.357px;">0962715043</div>
<div style="position:absolute;left:748.00px;top:610.00px;font-size:12px;line-height:20px;color:#1a1a1a;white-space:pre;letter-spacing:0.633px;">20</div>
<div style="position:absolute;left:1065.88px;top:610.00px;font-size:12px;line-height:20px;color:#1a1a1a;white-space:pre;">NO</div>
<div style="position:absolute;left:1200.88px;top:610.00px;font-size:12px;line-height:20px;color:#1a1a1a;white-space:pre;">NO</div>
<svg style="position:absolute;left:82px;top:609px;" width="5" height="5" viewBox="0 0 5 5"><path d="M0 0h5L0 5z" fill="#1E8A1E"/></svg>
<svg style="position:absolute;left:627px;top:609px;" width="5" height="5" viewBox="0 0 5 5"><path d="M0 0h5L0 5z" fill="#1E8A1E"/></svg>
<svg style="position:absolute;left:708px;top:609px;" width="5" height="5" viewBox="0 0 5 5"><path d="M0 0h5L0 5z" fill="#1E8A1E"/></svg>
<div style="position:absolute;left:81px;top:629px;width:1px;height:19px;background:#D4D4D4;"></div>
<div style="position:absolute;left:163px;top:629px;width:1px;height:19px;background:#D4D4D4;"></div>
<div style="position:absolute;left:328px;top:629px;width:1px;height:19px;background:#D4D4D4;"></div>
<div style="position:absolute;left:477px;top:629px;width:1px;height:19px;background:#D4D4D4;"></div>
<div style="position:absolute;left:626px;top:629px;width:1px;height:19px;background:#D4D4D4;"></div>
<div style="position:absolute;left:707px;top:629px;width:1px;height:19px;background:#D4D4D4;"></div>
<div style="position:absolute;left:801px;top:629px;width:1px;height:19px;background:#D4D4D4;"></div>
<div style="position:absolute;left:920px;top:629px;width:1px;height:19px;background:#D4D4D4;"></div>
<div style="position:absolute;left:1063px;top:629px;width:1px;height:19px;background:#D4D4D4;"></div>
<div style="position:absolute;left:1198px;top:629px;width:1px;height:19px;background:#D4D4D4;"></div>
<div style="position:absolute;left:1337px;top:629px;width:7px;height:19px;background:#fff;"></div>
<div style="position:absolute;left:26px;top:648px;width:1310px;height:1px;background:#9BC2E6;"></div>
<div style="position:absolute;left:0px;top:648px;width:25px;height:1px;background:#D4D4D4;"></div>
<div style="position:absolute;left:1337px;top:648px;width:7px;height:1px;background:#D4D4D4;"></div>
<div style="position:absolute;left:3.28px;top:630.00px;font-size:12px;line-height:20px;color:#444;white-space:pre;letter-spacing:-0.416px;">143</div>
<div style="position:absolute;left:58.13px;top:630.00px;font-size:12px;line-height:20px;color:#1a1a1a;white-space:pre;letter-spacing:0.478px;">142</div>
<div style="position:absolute;left:83.88px;top:630.00px;font-size:12px;line-height:20px;color:#1a1a1a;white-space:pre;letter-spacing:0.357px;">1713356283</div>
<div style="position:absolute;left:165.88px;top:630.00px;font-size:12px;line-height:20px;color:#1a1a1a;white-space:pre;letter-spacing:-0.334px;">FORTUN PLUA</div>
<div style="position:absolute;left:330.88px;top:630.00px;font-size:12px;line-height:20px;color:#1a1a1a;white-space:pre;letter-spacing:0.342px;">ELVIA CARMEN</div>
<div style="position:absolute;left:479.88px;top:630.00px;font-size:12px;line-height:20px;color:#1a1a1a;white-space:pre;letter-spacing:0.185px;">CRISTOBAL COLON</div>
<div style="position:absolute;left:628.88px;top:630.00px;font-size:12px;line-height:20px;color:#1a1a1a;white-space:pre;letter-spacing:0.357px;">0993282517</div>
<div style="position:absolute;left:748.00px;top:630.00px;font-size:12px;line-height:20px;color:#1a1a1a;white-space:pre;letter-spacing:0.633px;">20</div>
<div style="position:absolute;left:1065.88px;top:630.00px;font-size:12px;line-height:20px;color:#1a1a1a;white-space:pre;">NO</div>
<div style="position:absolute;left:1200.88px;top:630.00px;font-size:12px;line-height:20px;color:#1a1a1a;white-space:pre;">NO</div>
<svg style="position:absolute;left:82px;top:629px;" width="5" height="5" viewBox="0 0 5 5"><path d="M0 0h5L0 5z" fill="#1E8A1E"/></svg>
<svg style="position:absolute;left:627px;top:629px;" width="5" height="5" viewBox="0 0 5 5"><path d="M0 0h5L0 5z" fill="#1E8A1E"/></svg>
<svg style="position:absolute;left:708px;top:629px;" width="5" height="5" viewBox="0 0 5 5"><path d="M0 0h5L0 5z" fill="#1E8A1E"/></svg>
<div style="position:absolute;left:26px;top:649px;width:1310px;height:19px;background:#DDEBF7;"></div>
<div style="position:absolute;left:1337px;top:649px;width:7px;height:19px;background:#fff;"></div>
<div style="position:absolute;left:26px;top:668px;width:1310px;height:1px;background:#9BC2E6;"></div>
<div style="position:absolute;left:0px;top:668px;width:25px;height:1px;background:#D4D4D4;"></div>
<div style="position:absolute;left:1337px;top:668px;width:7px;height:1px;background:#D4D4D4;"></div>
<div style="position:absolute;left:0px;top:649px;width:25px;height:19px;background:#E1E1E1;"></div>
<div style="position:absolute;left:24px;top:648px;width:2px;height:21px;background:#217346;"></div>
<div style="position:absolute;left:2.39px;top:650.00px;font-size:12.5px;line-height:20px;color:#217346;white-space:pre;font-weight:700;">144</div>
<div style="position:absolute;left:58.13px;top:650.00px;font-size:12px;line-height:20px;color:#1a1a1a;white-space:pre;letter-spacing:0.478px;">143</div>
<div style="position:absolute;left:81px;top:669px;width:1px;height:9px;background:#D4D4D4;"></div>
<div style="position:absolute;left:163px;top:669px;width:1px;height:9px;background:#D4D4D4;"></div>
<div style="position:absolute;left:328px;top:669px;width:1px;height:9px;background:#D4D4D4;"></div>
<div style="position:absolute;left:477px;top:669px;width:1px;height:9px;background:#D4D4D4;"></div>
<div style="position:absolute;left:626px;top:669px;width:1px;height:9px;background:#D4D4D4;"></div>
<div style="position:absolute;left:707px;top:669px;width:1px;height:9px;background:#D4D4D4;"></div>
<div style="position:absolute;left:801px;top:669px;width:1px;height:9px;background:#D4D4D4;"></div>
<div style="position:absolute;left:920px;top:669px;width:1px;height:9px;background:#D4D4D4;"></div>
<div style="position:absolute;left:1063px;top:669px;width:1px;height:9px;background:#D4D4D4;"></div>
<div style="position:absolute;left:1198px;top:669px;width:1px;height:9px;background:#D4D4D4;"></div>
<div style="position:absolute;left:1336px;top:669px;width:1px;height:9px;background:#D4D4D4;"></div>
<div style="position:absolute;left:3.28px;top:670.00px;font-size:12px;line-height:20px;color:#444;white-space:pre;letter-spacing:-0.416px;">145</div>
<div style="position:absolute;left:1336px;top:209px;width:1px;height:459px;background:#9BC2E6;"></div>
<div style="position:absolute;left:0px;top:678px;width:1366px;height:90px;background:#F4F4F4;"></div>
<div style="position:absolute;left:0px;top:678px;width:1345px;height:1px;background:#ABABAB;"></div>
<div style="position:absolute;left:1344px;top:208px;width:1px;height:470px;background:#ABABAB;"></div>
<div style="position:absolute;left:80px;top:647px;width:81px;height:19px;border:2px solid #217346;box-shadow:inset 0 0 0 1px #fff;box-sizing:content-box"></div>
<div style="position:absolute;left:160px;top:665px;width:5px;height:5px;background:#217346;border:1px solid #fff;"></div>
<svg style="position:absolute;left:1332px;top:664px;" width="5" height="5" viewBox="0 0 5 5"><path d="M5 0V5H0z" fill="#3A4FB0"/></svg>
<div style="position:absolute;left:1345px;top:189px;width:21px;height:490px;background:#fff;"></div>
<div style="position:absolute;left:1348px;top:206px;width:15px;height:473px;background:#F0F0F0;"></div>
<div style="position:absolute;left:1348px;top:191px;width:13px;height:13px;border:1px solid #ABABAB;background:#fff"></div>
<svg style="position:absolute;left:1352px;top:196px;" width="8" height="4" viewBox="0 0 8 4"><path d="M0 4h8L4 0z" fill="#666"/></svg>
<div style="position:absolute;left:1348px;top:601px;width:13px;height:61px;border:1px solid #ABABAB;background:#fff"></div>
<div style="position:absolute;left:1348px;top:664px;width:13px;height:13px;border:1px solid #ABABAB;background:#fff"></div>
<svg style="position:absolute;left:1352px;top:669px;" width="8" height="4" viewBox="0 0 8 4"><path d="M0 0h8L4 4z" fill="#666"/></svg>
<div style="position:absolute;left:0px;top:679px;width:1366px;height:27px;background:#F4F4F4;"></div>
<svg style="position:absolute;left:27px;top:688px;" width="4" height="7" viewBox="0 0 4 7"><path d="M4 0V7L0 3.5z" fill="#C6C6C6"/></svg>
<svg style="position:absolute;left:56px;top:688px;" width="4" height="7" viewBox="0 0 4 7"><path d="M0 0V7L4 3.5z" fill="#C6C6C6"/></svg>
<div style="position:absolute;left:100px;top:682px;width:1px;height:20px;background:#C6C6C6;"></div>
<div style="position:absolute;left:165px;top:682px;width:1px;height:20px;background:#C6C6C6;"></div>
<div style="position:absolute;left:112.78px;top:682.00px;font-size:12px;line-height:20px;color:#444;white-space:pre;letter-spacing:-0.358px;">FASE 1</div>
<div style="position:absolute;left:177.58px;top:682.00px;font-size:12px;line-height:20px;color:#444;white-space:pre;letter-spacing:-0.297px;">FASE 2</div>
<div style="position:absolute;left:230px;top:678px;width:131px;height:24px;border-left:1px solid #ABABAB;border-right:1px solid #ABABAB;background:#fff"></div>
<div style="position:absolute;left:231px;top:700px;width:131px;height:2px;background:#217346;"></div>
<div style="position:absolute;left:242.25px;top:682.00px;font-size:12.5px;line-height:20px;color:#217346;white-space:pre;font-weight:700;letter-spacing:-0.126px;">Prospectos Fase 3</div>
<svg style="position:absolute;left:395px;top:683px;" width="17" height="17" viewBox="0 0 17 17"><circle cx="8.5" cy="8.5" r="7.5" fill="none" stroke="#777" stroke-width="1.3"/><path d="M8.5 4.5v8M4.5 8.5h8" stroke="#666" stroke-width="1.5"/></svg>
<svg style="position:absolute;left:818px;top:686px;" width="3" height="14" viewBox="0 0 3 14"><rect x="0" y="1" width="2" height="2" fill="#999"/><rect x="0" y="5" width="2" height="2" fill="#999"/><rect x="0" y="9" width="2" height="2" fill="#999"/></svg>
<div style="position:absolute;left:836px;top:685px;width:14px;height:13px;border:1px solid #ABABAB;background:#fff"></div>
<svg style="position:absolute;left:841px;top:688px;" width="5" height="9" viewBox="0 0 5 9"><path d="M5 0V9L0 4.5z" fill="#666"/></svg>
<div style="position:absolute;left:851px;top:685px;width:479px;height:15px;background:#EAEAEA;"></div>
<div style="position:absolute;left:851px;top:685px;width:433px;height:13px;border:1px solid #ABABAB;background:#fff"></div>
<div style="position:absolute;left:1330px;top:685px;width:14px;height:13px;border:1px solid #ABABAB;background:#fff"></div>
<svg style="position:absolute;left:1335px;top:688px;" width="5" height="9" viewBox="0 0 5 9"><path d="M0 0V9L5 4.5z" fill="#666"/></svg>
<div style="position:absolute;left:0px;top:706px;width:1366px;height:22px;background:#217346;"></div>
<div style="position:absolute;left:7.37px;top:707.00px;font-size:10.5px;line-height:20px;color:#fff;white-space:pre;letter-spacing:-1.027px;">LISTO</div>
<div style="position:absolute;left:1071px;top:706px;width:38px;height:22px;background:#19613A;"></div>
<svg style="position:absolute;left:1083px;top:712px;" width="13" height="11" viewBox="0 0 13 11"><path d="M0.5 0.5h12v10h-12zM0.5 3.5h12M0.5 7h12M4.5 0.5v10M8.5 0.5v10" fill="none" stroke="#fff"/></svg>
<svg style="position:absolute;left:1121px;top:712px;" width="14" height="11" viewBox="0 0 14 11"><rect x="0.5" y="0.5" width="13" height="10" fill="none" stroke="#fff"/><rect x="3.5" y="2.5" width="7" height="6" fill="none" stroke="#fff"/><path d="M5 4.5h4M5 6.5h4" stroke="#fff"/></svg>
<svg style="position:absolute;left:1159px;top:712px;" width="14" height="11" viewBox="0 0 14 11"><path d="M0.5 0.5h13v10h-13z" fill="none" stroke="#fff"/><path d="M3 1h2v6H3zM9 1h2v6H9zM1 7h12v1H1z" fill="#fff"/></svg>
<div style="position:absolute;left:1190px;top:716px;width:6px;height:2px;background:#fff;"></div>
<div style="position:absolute;left:1200px;top:716px;width:100px;height:1px;background:#fff;"></div>
<div style="position:absolute;left:1248px;top:711px;width:4px;height:11px;background:#fff;"></div>
<div style="position:absolute;left:1304px;top:716px;width:8px;height:2px;background:#fff;"></div>
<div style="position:absolute;left:1307px;top:713px;width:2px;height:8px;background:#fff;"></div>
<div style="position:absolute;left:1327.01px;top:707.00px;font-size:11.5px;line-height:20px;color:#fff;white-space:pre;letter-spacing:-0.590px;">100 %</div>
<div style="position:absolute;left:0px;top:728px;width:1366px;height:40px;background:#222222;"></div>
<div style="position:absolute;left:210px;top:728px;width:52px;height:38px;background:#353535;"></div>
<div style="position:absolute;left:1361px;top:728px;width:1px;height:40px;background:#555;"></div>
<svg style="position:absolute;left:13px;top:737px;" width="22" height="22" viewBox="0 0 22 22"><path d="M0.5 3.3L9.5 2V10.3H0.5zM10.5 1.8L21.5 0.3V10.3H10.5zM0.5 11.3h9v8.3L0.5 18.3zM10.5 11.3h11v10.4L10.5 20.2z" fill="#fff"/></svg>
<svg style="position:absolute;left:64px;top:735px;" width="25" height="27" viewBox="0 0 25 27"><defs><radialGradient id="ff" cx="0.5" cy="0.3" r="0.9"><stop offset="0" stop-color="#FFDE3F"/><stop offset="0.45" stop-color="#FF8A2A"/><stop offset="0.8" stop-color="#FF3C4E"/><stop offset="1" stop-color="#E31587"/></radialGradient></defs><path d="M12.5 26A11.5 11.5 0 0 1 2 10q2-4 4-5 0 3 2 4 3-6 7-9 0 4 4 7a11.5 11.5 0 0 1-6.5 19z" fill="url(#ff)"/><circle cx="12" cy="14" r="5.5" fill="#6E3FD8"/><path d="M4 9q4 0 6 4" fill="none" stroke="#FF9F2E" stroke-width="2"/></svg>
<svg style="position:absolute;left:118px;top:736px;" width="27" height="27" viewBox="0 0 27 27"><circle cx="11.5" cy="11.5" r="11" fill="#DB4437"/><path d="M11.5 11.5L2 17A11 11 0 0 0 17 21z" fill="#0F9D58"/><path d="M11.5 11.5L17 21A11 11 0 0 0 22.5 11.5V7H11.5z" fill="#FFCD40"/><circle cx="11.5" cy="11.5" r="5" fill="#fff"/><circle cx="11.5" cy="11.5" r="4" fill="#4285F4"/><circle cx="17.5" cy="19.5" r="6.5" fill="#777"/><circle cx="17.5" cy="19.5" r="5" fill="#C8C8C8"/><circle cx="15.5" cy="18.5" r="1.5" fill="#444"/><circle cx="19.5" cy="18.5" r="1.5" fill="#444"/><path d="M14 22q3.5 2 7 0" stroke="#555" fill="none"/></svg>
<svg style="position:absolute;left:172px;top:739px;" width="22" height="19" viewBox="0 0 22 19"><path d="M0.5 1.5h7l2 2h12v15h-21z" fill="#F4C95D"/><path d="M1.5 1.5h6l1.5 1.5" stroke="#4FC3F7" fill="none"/><rect x="0.5" y="5" width="21" height="13.5" fill="#FFE18F"/><path d="M4 18.5v-6h14v6h-3v-3H7v3z" fill="#29A8E8"/></svg>
<svg style="position:absolute;left:224px;top:736px;" width="24" height="23" viewBox="0 0 24 23"><path d="M8 3h15v17H8z" fill="#1D6F42"/><path d="M13 5.5h9M13 9h9M13 12.5h9M13 16h9M17.5 4.5v13" stroke="#fff" stroke-width="0.9"/><path d="M0 3L13.5 0.5V22.5L0 20Z" fill="#1D6F42"/><path d="M3.5 7l6 9M9.5 7l-6 9" stroke="#fff" stroke-width="2"/></svg>
<svg style="position:absolute;left:276px;top:736px;" width="24" height="24" viewBox="0 0 24 24"><defs><linearGradient id="np" x1="0" y1="0" x2="1" y2="1"><stop offset="0" stop-color="#E6F4FA"/><stop offset="1" stop-color="#5FA8C8"/></linearGradient></defs><path d="M6 1.5l16 3-5 18-16-4z" fill="url(#np)"/><path d="M22 4.5l1 15-6 3z" fill="#C9A23E"/><path d="M6 1.5l16 3-0.7 2.5L5.3 4z" fill="#9EC8DA"/></svg>
<svg style="position:absolute;left:329px;top:735px;" width="26" height="26" viewBox="0 0 26 26"><path d="M1 16q-1-8 9-10 10-2 12 5 1 4-4 4-3 0-2 3 1 4-6 4-8 0-9-6z" fill="#CDE6F5" stroke="#8DB9D5"/><circle cx="5.5" cy="14" r="2" fill="#E53935"/><circle cx="9" cy="10" r="2" fill="#7CC242"/><circle cx="13" cy="8.5" r="2" fill="#FBC02D"/><circle cx="9.5" cy="16" r="1.5" fill="#33566B"/><path d="M24 2L12.5 24l1.5 1L25 3z" fill="#E9962E"/><path d="M21 1l4-1 1 3-3 2z" fill="#D9B27A"/></svg>
<svg style="position:absolute;left:383px;top:736px;" width="24" height="23" viewBox="0 0 24 23"><path d="M8 3h15v17H8z" fill="#fff"/><path d="M8 3h15v17H8z" fill="none" stroke="#2B579A"/><path d="M13 6h9M13 8.5h9M13 11h9M13 13.5h9M13 16h9" stroke="#2B579A" stroke-width="0.9"/><path d="M0 3L13.5 0.5V22.5L0 20Z" fill="#2B579A"/><path d="M2 7.5l2 8 2.5-6 2.5 6 2-8" stroke="#fff" stroke-width="1.3" fill="none"/></svg>
<div style="position:absolute;left:108px;top:766px;width:44px;height:2px;background:#A0A0A0;"></div>
<div style="position:absolute;left:161px;top:766px;width:44px;height:2px;background:#A0A0A0;"></div>
<div style="position:absolute;left:210px;top:766px;width:52px;height:2px;background:#A0A0A0;"></div>
<div style="position:absolute;left:267px;top:766px;width:44px;height:2px;background:#A0A0A0;"></div>
<div style="position:absolute;left:320px;top:766px;width:44px;height:2px;background:#A0A0A0;"></div>
<div style="position:absolute;left:373px;top:766px;width:44px;height:2px;background:#A0A0A0;"></div>
<svg style="position:absolute;left:1123px;top:744px;" width="13" height="8" viewBox="0 0 13 8"><path d="M1 7.5l5.5-6 5.5 6" fill="none" stroke="#fff" stroke-width="1.3"/></svg>
<svg style="position:absolute;left:1144px;top:741px;" width="18" height="14" viewBox="0 0 18 14"><rect x="4.5" y="2.5" width="12" height="8" fill="none" stroke="#fff"/><path d="M10.5 10.5v2.5M6 13.5h9" stroke="#fff"/><rect x="0.5" y="0.5" width="5" height="5" fill="#222" stroke="#fff"/><path d="M3 5.5v3.5h2" stroke="#fff" fill="none"/></svg>
<svg style="position:absolute;left:1169px;top:740px;" width="17" height="16" viewBox="0 0 17 16"><path d="M0.5 3.5L15.5 0.5v13l-15 1.5z" fill="none" stroke="#fff"/><path d="M4 11q2-6 8-5M10 4l2 2-2 2" fill="none" stroke="#fff"/><circle cx="12.5" cy="12.5" r="3.5" fill="#E81123"/><rect x="12" y="10" width="1" height="3" fill="#fff"/><rect x="12" y="14" width="1" height="1" fill="#fff"/></svg>
<svg style="position:absolute;left:1193px;top:742px;" width="17" height="14" viewBox="0 0 17 14"><path d="M0.5 4.5h3l4-4v13l-4-4h-3z" fill="none" stroke="#fff"/><path d="M10 4.5q1.5 2.5 0 5M12.5 2.5q3 4.5 0 9M15 1q4 6 0 12" fill="none" stroke="#9a9a9a"/></svg>
<div style="position:absolute;left:1220.58px;top:738.00px;font-size:12px;line-height:20px;color:#fff;white-space:pre;letter-spacing:-2.458px;">ESP</div>
<div style="position:absolute;left:1267.25px;top:729.00px;font-size:12.5px;line-height:20px;color:#fff;white-space:pre;letter-spacing:-1.008px;">15:50</div>
<div style="position:absolute;left:1254.25px;top:747.00px;font-size:12.5px;line-height:20px;color:#fff;white-space:pre;letter-spacing:-0.370px;">23/6/2022</div>
<svg style="position:absolute;left:1325px;top:739px;" width="25" height="25" viewBox="0 0 25 25"><path d="M1 1.5h17v12H9l-4 4v-4H1z" fill="#fff"/><path d="M4 4.5h11M4 7.5h11M4 10.5h8" stroke="#222" stroke-width="1.2"/><circle cx="17.5" cy="17" r="6.5" fill="#222" stroke="#999" stroke-width="1.2"/><text x="13.6" y="21.3" font-family="Liberation Sans" font-weight="700" font-size="11.5" fill="#fff">2</text></svg></body></html>
